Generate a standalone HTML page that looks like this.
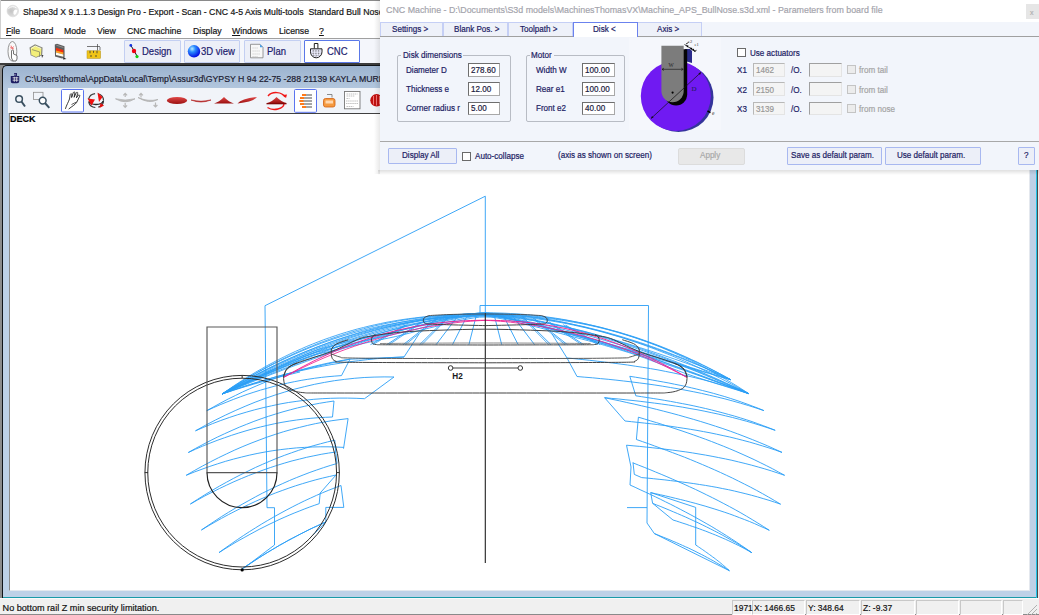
<!DOCTYPE html>
<html><head><meta charset="utf-8">
<style>
*{box-sizing:border-box;margin:0;padding:0}
html,body{width:1039px;height:615px;overflow:hidden;background:#fff;font-family:"Liberation Sans",sans-serif;position:relative}
.a{position:absolute;white-space:pre}
.a{-webkit-text-stroke:0.2px currentColor}
.btn{position:absolute;background:#eceff8;border:1px solid #c3cff2;border-radius:1px}
.inp{position:absolute;background:#fff;border:1px solid #a8a8a8;border-top-color:#6e6e6e;border-left-color:#6e6e6e}
.chk{position:absolute;width:9px;height:9px;border:1px solid #6a6a6a;background:#fff}
.grp{position:absolute;border:1px solid #b8bcc4;border-radius:2px}
</style></head><body>
<div class="a" style="left:0;top:0;width:1039px;height:1px;background:#8a8a8a"></div>
<div class="a" style="left:0;top:0;width:1px;height:64px;background:#d0d0d0"></div>
<div class="a" style="left:22.6px;top:6.50px;font-size:9.4px;line-height:9.4px;color:#141414;transform:scaleX(0.93);transform-origin:0 0;">Shape3d X 9.1.1.3 Design Pro - Export - Scan - CNC 4-5 Axis Multi-tools  Standard Bull Nose</div>
<div class="a" style="left:6.3px;top:26.10px;font-size:9.4px;line-height:9.4px;color:#141414;transform:scaleX(0.93);transform-origin:0 0;"><u>F</u>ile</div>
<div class="a" style="left:30.25px;top:26.10px;font-size:9.4px;line-height:9.4px;color:#141414;transform:scaleX(0.93);transform-origin:0 0;">Board</div>
<div class="a" style="left:63.5px;top:26.10px;font-size:9.4px;line-height:9.4px;color:#141414;transform:scaleX(0.93);transform-origin:0 0;">Mode</div>
<div class="a" style="left:97px;top:26.10px;font-size:9.4px;line-height:9.4px;color:#141414;transform:scaleX(0.93);transform-origin:0 0;">View</div>
<div class="a" style="left:126.6px;top:26.10px;font-size:9.4px;line-height:9.4px;color:#141414;transform:scaleX(0.93);transform-origin:0 0;">CNC machine</div>
<div class="a" style="left:192.5px;top:26.10px;font-size:9.4px;line-height:9.4px;color:#141414;transform:scaleX(0.93);transform-origin:0 0;">Display</div>
<div class="a" style="left:231.5px;top:26.10px;font-size:9.4px;line-height:9.4px;color:#141414;transform:scaleX(0.93);transform-origin:0 0;"><u>W</u>indows</div>
<div class="a" style="left:279px;top:26.10px;font-size:9.4px;line-height:9.4px;color:#141414;transform:scaleX(0.93);transform-origin:0 0;">License</div>
<div class="a" style="left:318.6px;top:26.10px;font-size:9.4px;line-height:9.4px;color:#141414;transform:scaleX(0.93);transform-origin:0 0;"><u>?</u></div>
<div class="a" style="left:0;top:38px;width:1039px;height:1px;background:#a0a0a0"></div>
<div class="a" style="left:0;top:39px;width:1039px;height:25px;background:#f4f6fb"></div>
<div class="btn" style="left:124.4px;top:40px;width:56.2px;height:22.5px;"></div>
<div class="btn" style="left:184.3px;top:40px;width:56.1px;height:22.5px;"></div>
<div class="btn" style="left:244.2px;top:40px;width:56.4px;height:22.5px;"></div>
<div class="btn" style="left:304.4px;top:40px;width:56.1px;height:22.5px;background:#fff;border-color:#5a78e8"></div>
<div class="a" style="left:141.8px;top:45.64px;font-size:10.7px;line-height:10.7px;color:#1c1c6e;transform:scaleX(0.89);transform-origin:0 0;">Design</div>
<div class="a" style="left:201.4px;top:45.64px;font-size:10.7px;line-height:10.7px;color:#1c1c6e;transform:scaleX(0.89);transform-origin:0 0;">3D view</div>
<div class="a" style="left:267.3px;top:45.64px;font-size:10.7px;line-height:10.7px;color:#1c1c6e;transform:scaleX(0.89);transform-origin:0 0;">Plan</div>
<div class="a" style="left:326.5px;top:45.64px;font-size:10.7px;line-height:10.7px;color:#1c1c6e;transform:scaleX(0.89);transform-origin:0 0;">CNC</div>
<div class="a" style="left:0;top:63px;width:1039px;height:2px;background:#3c3c3c"></div>
<div class="a" style="left:0;top:65px;width:1039px;height:550px;background:#8c8c8c"></div>
<div class="a" style="left:1037px;top:65px;width:2px;height:550px;background:#ececec"></div>
<div class="a" style="left:1037.3px;top:65px;width:1.2px;height:533px;background:#4a4a4a"></div>
<div class="a" style="left:2px;top:65px;width:1035px;height:533px;background:linear-gradient(to bottom,#9cb3cf 0px,#b3c7de 23px,#bed1e7 60px);border-radius:5px 5px 0 0;border:1px solid #101418;border-bottom:none;border-right:1px solid #22c4e8"></div>
<div class="a" style="left:3px;top:597px;width:1033px;height:1px;background:#1a9aa8"></div>
<div class="a" style="left:24.6px;top:74.40px;font-size:9.4px;line-height:9.4px;color:#1a1a30;transform:scaleX(0.93);transform-origin:0 0;">C:\Users\thoma\AppData\Local\Temp\Assur3d\GYPSY H 94 22-75 -288 21139 KAYLA MURPHY</div>
<div class="a" style="left:8px;top:88px;width:1022px;height:25px;background:#f1f4f9"></div>
<div class="a" style="left:8.5px;top:113px;width:1521.5px;height:478px;background:#fff;border-top:1px solid #404040;border-left:1px solid #8a8a8a;border-right:1px solid #e4e8ee;border-bottom:1px solid #e4e8ee;width:1021.5px"></div>
<div class="a" style="left:10px;top:114.40px;font-size:9.4px;line-height:9.4px;color:#000;transform:scaleX(0.96);transform-origin:0 0;font-weight:bold;">DECK</div>
<!--DRAW-->
<svg class="a" style="left:0;top:0" width="1039" height="615" viewBox="0 0 1039 615">
<path d="M222.0,394.0 L227.7,391.7 L233.3,389.4 L239.0,387.1 L244.6,384.9 L250.3,382.6 L255.9,380.4 L261.6,378.2 L267.2,376.0 L272.9,373.8 L278.6,371.7 L284.2,369.5 L289.9,367.4 L295.5,365.3 L301.2,363.3 L306.8,361.2 L312.5,359.2 L318.1,357.2 L323.8,355.2 L329.5,353.2 L335.1,351.3 L340.8,349.3 L346.4,347.4 L352.1,345.6 L357.7,343.7 L363.4,341.9 L369.0,340.1 L374.7,338.4 L380.4,336.6 L386.0,334.9 L391.7,333.2 L397.3,331.6 L403.0,330.0 L408.6,328.4 L414.3,326.9 L419.9,325.4 L425.6,323.9 L431.3,322.5 L436.9,321.2 L442.6,319.8 L448.2,318.6 L453.9,317.4 L459.5,316.3 L465.2,315.2 L470.8,314.2 L476.5,313.4 L482.2,312.7 L487.8,313.0 L493.5,314.4 L499.1,315.8 L504.8,317.2 L510.4,318.6 L516.1,320.1 L521.7,321.6 L527.4,323.1 L533.1,324.6 L538.7,326.1 L544.4,327.6 L550.0,329.1 L555.7,330.6 L561.3,332.1 L567.0,333.7 L572.6,335.2 L578.3,336.8 L584.0,338.3 L589.6,339.9 L595.3,341.4 L600.9,343.0 L606.6,344.6 L612.2,346.1 L617.9,347.7 L623.5,349.3 L629.2,350.9 L634.9,352.5 L640.5,354.0 L646.2,355.6 L651.8,357.2 L657.5,358.8 L663.1,360.4 L668.8,362.0 L674.4,363.6 L680.1,365.2 L685.8,366.9 L691.4,368.5 L697.1,370.1 L702.7,371.7 L708.4,373.3 L714.0,374.9 L719.7,376.6 L725.3,378.2 L731.0,379.8" stroke="#2a9ef6" stroke-width="0.85" fill="none" />
<path d="M222.0,394.0 L227.9,391.5 L233.7,389.0 L239.6,386.5 L245.4,384.1 L251.3,381.6 L257.1,379.3 L263.0,376.9 L268.8,374.5 L274.7,372.2 L280.5,369.9 L286.4,367.7 L292.3,365.5 L298.1,363.3 L304.0,361.1 L309.8,359.0 L315.7,356.8 L321.5,354.8 L327.4,352.7 L333.2,350.7 L339.1,348.7 L344.9,346.8 L350.8,344.9 L356.7,343.0 L362.5,341.2 L368.4,339.4 L374.2,337.6 L380.1,335.9 L385.9,334.2 L391.8,332.6 L397.6,331.0 L403.5,329.4 L409.3,327.9 L415.2,326.5 L421.1,325.1 L426.9,323.7 L432.8,322.4 L438.6,321.2 L444.5,320.0 L450.3,318.9 L456.2,317.9 L462.0,317.0 L467.9,316.2 L473.7,315.4 L479.6,314.9 L485.4,314.5 L491.3,314.8 L497.2,315.2 L503.0,315.8 L508.9,316.5 L514.7,317.3 L520.6,318.2 L526.4,319.2 L532.3,320.2 L538.1,321.3 L544.0,322.5 L549.8,323.7 L555.7,325.1 L561.6,326.4 L567.4,327.8 L573.3,329.3 L579.1,330.9 L585.0,332.4 L590.8,334.1 L596.7,335.7 L602.5,337.5 L608.4,339.2 L614.2,341.1 L620.1,342.9 L626.0,344.8 L631.8,346.8 L637.7,348.8 L643.5,350.8 L649.4,352.9 L655.2,355.0 L661.1,357.1 L666.9,359.3 L672.8,361.6 L678.6,363.8 L684.5,366.1 L690.4,368.5 L696.2,370.8 L702.1,373.2 L707.9,375.7 L713.8,378.2 L719.6,380.7 L725.5,383.2 L731.3,385.8 L737.2,388.4 L743.0,391.0 L748.9,393.7" stroke="#2a9ef6" stroke-width="0.85" fill="none" />
<path d="M222.0,394.0 L227.7,391.4 L233.3,388.8 L239.0,386.3 L244.6,383.8 L250.3,381.3 L255.9,378.9 L261.6,376.4 L267.2,374.0 L272.9,371.7 L278.6,369.4 L284.2,367.1 L289.9,364.8 L295.5,362.6 L301.2,360.4 L306.8,358.2 L312.5,356.1 L318.1,354.0 L323.8,351.9 L329.5,349.9 L335.1,347.9 L340.8,345.9 L346.4,344.0 L352.1,342.1 L357.7,340.3 L363.4,338.5 L369.0,336.7 L374.7,335.0 L380.4,333.3 L386.0,331.7 L391.7,330.1 L397.3,328.6 L403.0,327.1 L408.6,325.6 L414.3,324.2 L419.9,322.9 L425.6,321.6 L431.3,320.4 L436.9,319.2 L442.6,318.1 L448.2,317.1 L453.9,316.2 L459.5,315.3 L465.2,314.5 L470.8,313.9 L476.5,313.3 L482.2,312.9 L487.8,312.8 L493.5,312.9 L499.1,313.0 L504.8,313.2 L510.4,313.5 L516.1,313.8 L521.7,314.2 L527.4,314.7 L533.1,315.3 L538.7,315.9 L544.4,316.6 L550.0,317.4 L555.7,318.2 L561.3,319.1 L567.0,320.1 L572.6,321.2 L578.3,322.3 L584.0,323.5 L589.6,324.8 L595.3,326.1 L600.9,327.5 L606.6,329.0 L612.2,330.6 L617.9,332.2 L623.5,333.9 L629.2,335.7 L634.9,337.5 L640.5,339.4 L646.2,341.4 L651.8,343.5 L657.5,345.6 L663.1,347.8 L668.8,350.1 L674.4,352.4 L680.1,354.8 L685.8,357.3 L691.4,359.9 L697.1,362.5 L702.7,365.2 L708.4,368.0 L714.0,370.8 L719.7,373.7 L725.3,376.7 L731.0,379.8" stroke="#2a9ef6" stroke-width="0.85" fill="none" />
<path d="M222.0,394.0 L227.9,391.2 L233.7,388.4 L239.6,385.7 L245.4,383.1 L251.3,380.4 L257.1,377.8 L263.0,375.2 L268.8,372.7 L274.7,370.2 L280.5,367.8 L286.4,365.4 L292.3,363.0 L298.1,360.7 L304.0,358.5 L309.8,356.2 L315.7,354.0 L321.5,351.9 L327.4,349.8 L333.2,347.8 L339.1,345.8 L344.9,343.8 L350.8,341.9 L356.7,340.0 L362.5,338.2 L368.4,336.5 L374.2,334.8 L380.1,333.1 L385.9,331.5 L391.8,330.0 L397.6,328.5 L403.5,327.1 L409.3,325.7 L415.2,324.4 L421.1,323.1 L426.9,322.0 L432.8,320.9 L438.6,319.8 L444.5,318.9 L450.3,318.0 L456.2,317.2 L462.0,316.5 L467.9,315.9 L473.7,315.4 L479.6,315.0 L485.4,314.8 L491.3,315.6 L497.2,316.5 L503.0,317.6 L508.9,318.8 L514.7,320.0 L520.6,321.3 L526.4,322.7 L532.3,324.1 L538.1,325.6 L544.0,327.0 L549.8,328.6 L555.7,330.1 L561.6,331.7 L567.4,333.4 L573.3,335.0 L579.1,336.7 L585.0,338.4 L590.8,340.1 L596.7,341.9 L602.5,343.7 L608.4,345.5 L614.2,347.3 L620.1,349.1 L626.0,351.0 L631.8,352.9 L637.7,354.8 L643.5,356.7 L649.4,358.6 L655.2,360.6 L661.1,362.5 L666.9,364.5 L672.8,366.5 L678.6,368.5 L684.5,370.5 L690.4,372.6 L696.2,374.6 L702.1,376.7 L707.9,378.8 L713.8,380.9 L719.6,383.0 L725.5,385.1 L731.3,387.2 L737.2,389.4 L743.0,391.5 L748.9,393.7" stroke="#2a9ef6" stroke-width="0.85" fill="none" />
<path d="M222.0,394.0 L227.7,391.1 L233.3,388.2 L239.0,385.4 L244.6,382.7 L250.3,379.9 L255.9,377.3 L261.6,374.6 L267.2,372.0 L272.9,369.5 L278.6,367.0 L284.2,364.5 L289.9,362.1 L295.5,359.8 L301.2,357.5 L306.8,355.2 L312.5,353.0 L318.1,350.8 L323.8,348.7 L329.5,346.6 L335.1,344.6 L340.8,342.6 L346.4,340.7 L352.1,338.9 L357.7,337.0 L363.4,335.3 L369.0,333.6 L374.7,331.9 L380.4,330.3 L386.0,328.8 L391.7,327.3 L397.3,325.9 L403.0,324.6 L408.6,323.3 L414.3,322.0 L419.9,320.9 L425.6,319.8 L431.3,318.7 L436.9,317.8 L442.6,316.9 L448.2,316.1 L453.9,315.4 L459.5,314.7 L465.2,314.2 L470.8,313.7 L476.5,313.4 L482.2,313.1 L487.8,313.1 L493.5,313.3 L499.1,313.6 L504.8,313.9 L510.4,314.4 L516.1,315.0 L521.7,315.6 L527.4,316.3 L533.1,317.1 L538.7,317.9 L544.4,318.8 L550.0,319.8 L555.7,320.8 L561.3,321.9 L567.0,323.1 L572.6,324.3 L578.3,325.6 L584.0,327.0 L589.6,328.4 L595.3,329.8 L600.9,331.3 L606.6,332.9 L612.2,334.5 L617.9,336.2 L623.5,337.9 L629.2,339.7 L634.9,341.5 L640.5,343.3 L646.2,345.3 L651.8,347.2 L657.5,349.3 L663.1,351.3 L668.8,353.5 L674.4,355.6 L680.1,357.8 L685.8,360.1 L691.4,362.4 L697.1,364.7 L702.7,367.1 L708.4,369.6 L714.0,372.1 L719.7,374.6 L725.3,377.2 L731.0,379.8" stroke="#2a9ef6" stroke-width="0.85" fill="none" />
<path d="M222.0,394.0 L227.9,391.0 L233.7,388.1 L239.6,385.3 L245.4,382.4 L251.3,379.7 L257.1,376.9 L263.0,374.3 L268.8,371.6 L274.7,369.1 L280.5,366.5 L286.4,364.1 L292.3,361.6 L298.1,359.3 L304.0,356.9 L309.8,354.7 L315.7,352.4 L321.5,350.3 L327.4,348.2 L333.2,346.1 L339.1,344.1 L344.9,342.2 L350.8,340.3 L356.7,338.4 L362.5,336.7 L368.4,334.9 L374.2,333.3 L380.1,331.7 L385.9,330.1 L391.8,328.7 L397.6,327.3 L403.5,325.9 L409.3,324.6 L415.2,323.4 L421.1,322.3 L426.9,321.2 L432.8,320.2 L438.6,319.3 L444.5,318.4 L450.3,317.7 L456.2,317.0 L462.0,316.4 L467.9,315.9 L473.7,315.5 L479.6,315.2 L485.4,315.1 L491.3,315.1 L497.2,315.2 L503.0,315.3 L508.9,315.5 L514.7,315.8 L520.6,316.1 L526.4,316.4 L532.3,316.9 L538.1,317.4 L544.0,318.0 L549.8,318.7 L555.7,319.4 L561.6,320.3 L567.4,321.2 L573.3,322.2 L579.1,323.2 L585.0,324.4 L590.8,325.6 L596.7,326.9 L602.5,328.3 L608.4,329.8 L614.2,331.4 L620.1,333.1 L626.0,334.9 L631.8,336.7 L637.7,338.7 L643.5,340.7 L649.4,342.8 L655.2,345.0 L661.1,347.3 L666.9,349.8 L672.8,352.3 L678.6,354.9 L684.5,357.6 L690.4,360.3 L696.2,363.2 L702.1,366.2 L707.9,369.3 L713.8,372.5 L719.6,375.8 L725.5,379.2 L731.3,382.6 L737.2,386.2 L743.0,389.9 L748.9,393.7" stroke="#2a9ef6" stroke-width="0.85" fill="none" />
<path d="M222.0,394.0 L227.7,390.9 L233.3,388.0 L239.0,385.0 L244.6,382.1 L250.3,379.3 L255.9,376.5 L261.6,373.7 L267.2,371.1 L272.9,368.4 L278.6,365.8 L284.2,363.3 L289.9,360.9 L295.5,358.4 L301.2,356.1 L306.8,353.8 L312.5,351.5 L318.1,349.3 L323.8,347.2 L329.5,345.1 L335.1,343.1 L340.8,341.2 L346.4,339.3 L352.1,337.4 L357.7,335.6 L363.4,333.9 L369.0,332.2 L374.7,330.6 L380.4,329.1 L386.0,327.6 L391.7,326.2 L397.3,324.9 L403.0,323.6 L408.6,322.4 L414.3,321.2 L419.9,320.2 L425.6,319.2 L431.3,318.2 L436.9,317.4 L442.6,316.6 L448.2,315.9 L453.9,315.2 L459.5,314.7 L465.2,314.2 L470.8,313.8 L476.5,313.6 L482.2,313.4 L487.8,313.5 L493.5,313.9 L499.1,314.4 L504.8,315.1 L510.4,315.9 L516.1,316.8 L521.7,317.7 L527.4,318.7 L533.1,319.7 L538.7,320.8 L544.4,322.0 L550.0,323.2 L555.7,324.4 L561.3,325.7 L567.0,327.1 L572.6,328.5 L578.3,329.9 L584.0,331.3 L589.6,332.8 L595.3,334.4 L600.9,335.9 L606.6,337.5 L612.2,339.2 L617.9,340.8 L623.5,342.5 L629.2,344.2 L634.9,346.0 L640.5,347.8 L646.2,349.6 L651.8,351.4 L657.5,353.3 L663.1,355.2 L668.8,357.1 L674.4,359.0 L680.1,361.0 L685.8,363.0 L691.4,365.0 L697.1,367.1 L702.7,369.1 L708.4,371.2 L714.0,373.3 L719.7,375.5 L725.3,377.6 L731.0,379.8" stroke="#2a9ef6" stroke-width="0.85" fill="none" />
<path d="M222.0,394.0 L227.9,390.6 L233.7,387.4 L239.6,384.2 L245.4,381.0 L251.3,378.0 L257.1,375.0 L263.0,372.0 L268.8,369.2 L274.7,366.4 L280.5,363.7 L286.4,361.0 L292.3,358.5 L298.1,356.0 L304.0,353.6 L309.8,351.2 L315.7,348.9 L321.5,346.7 L327.4,344.6 L333.2,342.5 L339.1,340.6 L344.9,338.6 L350.8,336.8 L356.7,335.0 L362.5,333.3 L368.4,331.7 L374.2,330.2 L380.1,328.7 L385.9,327.3 L391.8,326.0 L397.6,324.7 L403.5,323.6 L409.3,322.5 L415.2,321.5 L421.1,320.5 L426.9,319.7 L432.8,318.9 L438.6,318.2 L444.5,317.5 L450.3,317.0 L456.2,316.5 L462.0,316.1 L467.9,315.8 L473.7,315.6 L479.6,315.5 L485.4,315.4 L491.3,315.5 L497.2,315.6 L503.0,315.9 L508.9,316.2 L514.7,316.6 L520.6,317.1 L526.4,317.7 L532.3,318.3 L538.1,319.0 L544.0,319.8 L549.8,320.7 L555.7,321.7 L561.6,322.7 L567.4,323.8 L573.3,325.0 L579.1,326.3 L585.0,327.6 L590.8,329.0 L596.7,330.5 L602.5,332.0 L608.4,333.7 L614.2,335.4 L620.1,337.1 L626.0,339.0 L631.8,340.9 L637.7,342.9 L643.5,344.9 L649.4,347.0 L655.2,349.2 L661.1,351.5 L666.9,353.8 L672.8,356.2 L678.6,358.7 L684.5,361.2 L690.4,363.8 L696.2,366.5 L702.1,369.3 L707.9,372.1 L713.8,375.0 L719.6,377.9 L725.5,380.9 L731.3,384.0 L737.2,387.2 L743.0,390.4 L748.9,393.7" stroke="#2a9ef6" stroke-width="0.85" fill="none" />
<path d="M222.0,394.0 L227.7,390.7 L233.3,387.4 L239.0,384.2 L244.6,381.0 L250.3,378.0 L255.9,375.0 L261.6,372.0 L267.2,369.2 L272.9,366.4 L278.6,363.7 L284.2,361.0 L289.9,358.5 L295.5,356.0 L301.2,353.5 L306.8,351.2 L312.5,348.9 L318.1,346.6 L323.8,344.5 L329.5,342.4 L335.1,340.4 L340.8,338.5 L346.4,336.6 L352.1,334.8 L357.7,333.1 L363.4,331.4 L369.0,329.9 L374.7,328.4 L380.4,326.9 L386.0,325.6 L391.7,324.3 L397.3,323.0 L403.0,321.9 L408.6,320.8 L414.3,319.8 L419.9,318.9 L425.6,318.1 L431.3,317.3 L436.9,316.6 L442.6,315.9 L448.2,315.4 L453.9,314.9 L459.5,314.5 L465.2,314.2 L470.8,313.9 L476.5,313.8 L482.2,313.7 L487.8,314.0 L493.5,315.0 L499.1,316.1 L504.8,317.3 L510.4,318.5 L516.1,319.8 L521.7,321.1 L527.4,322.4 L533.1,323.8 L538.7,325.2 L544.4,326.6 L550.0,328.0 L555.7,329.5 L561.3,330.9 L567.0,332.4 L572.6,333.9 L578.3,335.4 L584.0,336.9 L589.6,338.4 L595.3,340.0 L600.9,341.5 L606.6,343.1 L612.2,344.7 L617.9,346.3 L623.5,347.9 L629.2,349.5 L634.9,351.1 L640.5,352.7 L646.2,354.4 L651.8,356.0 L657.5,357.7 L663.1,359.3 L668.8,361.0 L674.4,362.7 L680.1,364.4 L685.8,366.0 L691.4,367.7 L697.1,369.4 L702.7,371.2 L708.4,372.9 L714.0,374.6 L719.7,376.3 L725.3,378.1 L731.0,379.8" stroke="#2a9ef6" stroke-width="0.85" fill="none" />
<path d="M222.0,394.0 L227.9,390.5 L233.7,387.1 L239.6,383.7 L245.4,380.5 L251.3,377.3 L257.1,374.2 L263.0,371.2 L268.8,368.3 L274.7,365.4 L280.5,362.6 L286.4,359.9 L292.3,357.3 L298.1,354.8 L304.0,352.3 L309.8,350.0 L315.7,347.7 L321.5,345.5 L327.4,343.4 L333.2,341.3 L339.1,339.3 L344.9,337.5 L350.8,335.7 L356.7,333.9 L362.5,332.3 L368.4,330.7 L374.2,329.2 L380.1,327.8 L385.9,326.5 L391.8,325.2 L397.6,324.1 L403.5,323.0 L409.3,321.9 L415.2,321.0 L421.1,320.1 L426.9,319.4 L432.8,318.7 L438.6,318.0 L444.5,317.5 L450.3,317.0 L456.2,316.6 L462.0,316.3 L467.9,316.0 L473.7,315.8 L479.6,315.7 L485.4,315.7 L491.3,315.9 L497.2,316.2 L503.0,316.7 L508.9,317.3 L514.7,317.9 L520.6,318.7 L526.4,319.5 L532.3,320.4 L538.1,321.4 L544.0,322.5 L549.8,323.6 L555.7,324.8 L561.6,326.1 L567.4,327.4 L573.3,328.8 L579.1,330.3 L585.0,331.8 L590.8,333.3 L596.7,334.9 L602.5,336.6 L608.4,338.3 L614.2,340.1 L620.1,341.9 L626.0,343.8 L631.8,345.7 L637.7,347.7 L643.5,349.7 L649.4,351.8 L655.2,353.9 L661.1,356.1 L666.9,358.3 L672.8,360.5 L678.6,362.8 L684.5,365.2 L690.4,367.6 L696.2,370.0 L702.1,372.5 L707.9,375.0 L713.8,377.5 L719.6,380.1 L725.5,382.8 L731.3,385.4 L737.2,388.1 L743.0,390.9 L748.9,393.7" stroke="#2a9ef6" stroke-width="0.85" fill="none" />
<path d="M222.0,394.0 L227.7,390.3 L233.3,386.7 L239.0,383.1 L244.6,379.7 L250.3,376.4 L255.9,373.1 L261.6,370.0 L267.2,366.9 L272.9,363.9 L278.6,361.1 L284.2,358.3 L289.9,355.6 L295.5,353.0 L301.2,350.5 L306.8,348.1 L312.5,345.8 L318.1,343.5 L323.8,341.4 L329.5,339.3 L335.1,337.4 L340.8,335.5 L346.4,333.7 L352.1,331.9 L357.7,330.3 L363.4,328.8 L369.0,327.3 L374.7,325.9 L380.4,324.6 L386.0,323.4 L391.7,322.3 L397.3,321.2 L403.0,320.2 L408.6,319.3 L414.3,318.5 L419.9,317.7 L425.6,317.1 L431.3,316.4 L436.9,315.9 L442.6,315.4 L448.2,315.0 L453.9,314.7 L459.5,314.4 L465.2,314.2 L470.8,314.1 L476.5,314.0 L482.2,314.0 L487.8,314.0 L493.5,314.0 L499.1,314.1 L504.8,314.3 L510.4,314.5 L516.1,314.8 L521.7,315.1 L527.4,315.6 L533.1,316.1 L538.7,316.6 L544.4,317.2 L550.0,317.9 L555.7,318.7 L561.3,319.5 L567.0,320.4 L572.6,321.4 L578.3,322.5 L584.0,323.6 L589.6,324.8 L595.3,326.1 L600.9,327.4 L606.6,328.9 L612.2,330.4 L617.9,331.9 L623.5,333.6 L629.2,335.3 L634.9,337.1 L640.5,339.0 L646.2,341.0 L651.8,343.0 L657.5,345.1 L663.1,347.3 L668.8,349.6 L674.4,351.9 L680.1,354.4 L685.8,356.9 L691.4,359.5 L697.1,362.1 L702.7,364.9 L708.4,367.7 L714.0,370.6 L719.7,373.6 L725.3,376.7 L731.0,379.8" stroke="#2a9ef6" stroke-width="0.85" fill="none" />
<path d="M222.0,394.0 L227.9,390.2 L233.7,386.5 L239.6,382.9 L245.4,379.4 L251.3,376.1 L257.1,372.8 L263.0,369.6 L268.8,366.5 L274.7,363.5 L280.5,360.7 L286.4,357.9 L292.3,355.2 L298.1,352.6 L304.0,350.1 L309.8,347.7 L315.7,345.4 L321.5,343.2 L327.4,341.1 L333.2,339.1 L339.1,337.2 L344.9,335.3 L350.8,333.6 L356.7,331.9 L362.5,330.4 L368.4,328.9 L374.2,327.5 L380.1,326.2 L385.9,325.0 L391.8,323.9 L397.6,322.8 L403.5,321.8 L409.3,321.0 L415.2,320.1 L421.1,319.4 L426.9,318.8 L432.8,318.2 L438.6,317.7 L444.5,317.2 L450.3,316.9 L456.2,316.6 L462.0,316.4 L467.9,316.2 L473.7,316.1 L479.6,316.0 L485.4,316.0 L491.3,316.5 L497.2,317.2 L503.0,318.1 L508.9,319.1 L514.7,320.1 L520.6,321.3 L526.4,322.5 L532.3,323.7 L538.1,325.1 L544.0,326.4 L549.8,327.8 L555.7,329.3 L561.6,330.8 L567.4,332.3 L573.3,333.9 L579.1,335.5 L585.0,337.2 L590.8,338.8 L596.7,340.5 L602.5,342.3 L608.4,344.1 L614.2,345.9 L620.1,347.7 L626.0,349.5 L631.8,351.4 L637.7,353.3 L643.5,355.3 L649.4,357.2 L655.2,359.2 L661.1,361.2 L666.9,363.2 L672.8,365.3 L678.6,367.3 L684.5,369.4 L690.4,371.5 L696.2,373.7 L702.1,375.8 L707.9,378.0 L713.8,380.2 L719.6,382.4 L725.5,384.6 L731.3,386.9 L737.2,389.1 L743.0,391.4 L748.9,393.7" stroke="#2a9ef6" stroke-width="0.85" fill="none" />
<path d="M222.0,394.0 L227.7,390.1 L233.3,386.2 L239.0,382.5 L244.6,378.9 L250.3,375.4 L255.9,372.0 L261.6,368.8 L267.2,365.6 L272.9,362.6 L278.6,359.6 L284.2,356.8 L289.9,354.0 L295.5,351.4 L301.2,348.9 L306.8,346.4 L312.5,344.1 L318.1,341.9 L323.8,339.7 L329.5,337.7 L335.1,335.8 L340.8,333.9 L346.4,332.2 L352.1,330.5 L357.7,328.9 L363.4,327.5 L369.0,326.1 L374.7,324.8 L380.4,323.6 L386.0,322.4 L391.7,321.4 L397.3,320.4 L403.0,319.5 L408.6,318.7 L414.3,318.0 L419.9,317.3 L425.6,316.7 L431.3,316.2 L436.9,315.8 L442.6,315.4 L448.2,315.1 L453.9,314.8 L459.5,314.6 L465.2,314.4 L470.8,314.3 L476.5,314.3 L482.2,314.3 L487.8,314.3 L493.5,314.4 L499.1,314.6 L504.8,314.9 L510.4,315.3 L516.1,315.8 L521.7,316.3 L527.4,316.9 L533.1,317.6 L538.7,318.3 L544.4,319.2 L550.0,320.1 L555.7,321.0 L561.3,322.0 L567.0,323.1 L572.6,324.3 L578.3,325.5 L584.0,326.7 L589.6,328.1 L595.3,329.5 L600.9,330.9 L606.6,332.4 L612.2,334.0 L617.9,335.6 L623.5,337.3 L629.2,339.1 L634.9,340.9 L640.5,342.7 L646.2,344.6 L651.8,346.6 L657.5,348.6 L663.1,350.7 L668.8,352.8 L674.4,355.0 L680.1,357.2 L685.8,359.5 L691.4,361.9 L697.1,364.3 L702.7,366.7 L708.4,369.3 L714.0,371.8 L719.7,374.4 L725.3,377.1 L731.0,379.8" stroke="#2a9ef6" stroke-width="0.85" fill="none" />
<path d="M222.0,394.0 L228.3,391.2 L237.1,387.3 L247.6,382.6 L259.1,377.6 L270.8,372.4 L282.0,367.5 L292.0,363.3 L300.0,360.0 L306.1,357.7 L310.9,356.0 L314.7,354.8 L317.9,353.9 L320.9,353.3 L323.8,352.7 L327.1,352.0 L331.0,351.0 L335.6,349.9 L340.4,348.7 L345.4,347.5 L350.6,346.3 L355.7,345.2 L360.7,344.1 L365.5,343.0 L370.0,342.0 L374.1,341.1 L377.9,340.3 L381.5,339.5 L384.9,338.8 L388.4,338.1 L392.0,337.3 L395.8,336.5 L400.0,335.5 L404.5,334.4 L409.2,333.2 L414.0,331.9 L419.0,330.6 L424.2,329.3 L429.4,328.0 L434.7,326.7 L440.0,325.5 L445.4,324.2 L451.0,322.9 L456.6,321.5 L462.4,320.1 L468.1,318.9 L473.9,317.9 L479.6,317.2 L485.3,317.0 L490.9,317.2 L496.6,317.9 L502.3,318.9 L508.0,320.1 L513.6,321.4 L519.2,322.8 L524.6,324.2 L530.0,325.5 L535.3,326.7 L540.6,328.0 L545.8,329.4 L550.9,330.8 L555.9,332.2 L560.8,333.5 L565.5,334.8 L570.0,336.0 L574.2,337.1 L578.0,338.1 L581.6,339.0 L585.1,339.9 L588.5,340.8 L592.1,341.8 L595.9,342.8 L600.0,344.0 L604.4,345.3 L608.8,346.6 L613.4,347.9 L618.2,349.3 L623.1,350.8 L628.2,352.4 L633.5,354.1 L639.0,356.0 L644.7,358.0 L650.7,360.3 L656.9,362.6 L663.3,365.1 L669.8,367.6 L676.4,370.1 L683.2,372.6 L690.0,375.0 L697.4,377.5 L705.5,380.1 L714.1,382.9 L722.6,385.5 L730.8,388.1 L738.1,390.3 L744.3,392.3 L748.9,393.7" stroke="#2a9ef6" stroke-width="0.85" fill="none" />
<path d="M222.0,394.0 L228.3,391.1 L237.1,387.0 L247.6,382.2 L259.1,376.9 L270.8,371.5 L282.0,366.4 L292.0,362.0 L300.0,358.5 L306.1,356.0 L310.9,354.2 L314.7,352.8 L317.9,351.8 L320.9,351.1 L323.8,350.3 L327.1,349.5 L331.0,348.5 L335.6,347.3 L340.4,346.1 L345.4,344.9 L350.6,343.8 L355.7,342.6 L360.7,341.6 L365.5,340.5 L370.0,339.5 L374.1,338.6 L377.9,337.8 L381.5,337.0 L384.9,336.3 L388.4,335.5 L392.0,334.8 L395.8,333.9 L400.0,333.0 L404.5,332.0 L409.2,330.9 L414.0,329.7 L419.0,328.5 L424.2,327.2 L429.4,326.0 L434.7,324.9 L440.0,323.8 L445.4,322.6 L451.0,321.3 L456.6,320.0 L462.4,318.7 L468.1,317.5 L473.9,316.6 L479.6,316.0 L485.3,315.8 L490.9,316.0 L496.6,316.6 L502.3,317.5 L508.0,318.6 L513.6,319.9 L519.2,321.3 L524.6,322.6 L530.0,323.8 L535.3,324.9 L540.6,326.1 L545.8,327.4 L550.9,328.6 L555.9,329.9 L560.8,331.1 L565.5,332.4 L570.0,333.5 L574.2,334.6 L578.0,335.5 L581.6,336.5 L585.1,337.4 L588.5,338.3 L592.1,339.3 L595.9,340.3 L600.0,341.5 L604.4,342.8 L608.8,344.1 L613.4,345.4 L618.2,346.8 L623.1,348.3 L628.2,349.9 L633.5,351.7 L639.0,353.5 L644.7,355.5 L650.7,357.6 L656.9,359.8 L663.3,362.1 L669.8,364.5 L676.4,367.0 L683.2,369.5 L690.0,372.0 L697.4,374.7 L705.5,377.7 L714.1,380.9 L722.6,384.0 L730.8,387.0 L738.1,389.7 L744.3,392.0 L748.9,393.7" stroke="#2a9ef6" stroke-width="0.85" fill="none" />
<path d="M222.0,394.0 L228.3,391.0 L237.1,386.7 L247.6,381.7 L259.1,376.2 L270.8,370.6 L282.0,365.3 L292.0,360.6 L300.0,357.0 L306.1,354.4 L310.9,352.4 L314.7,350.9 L317.9,349.8 L320.9,348.8 L323.8,348.0 L327.1,347.1 L331.0,346.0 L335.6,344.8 L340.4,343.6 L345.4,342.4 L350.6,341.2 L355.7,340.1 L360.7,339.0 L365.5,338.0 L370.0,337.0 L374.1,336.1 L377.9,335.2 L381.5,334.5 L384.9,333.7 L388.4,333.0 L392.0,332.2 L395.8,331.4 L400.0,330.5 L404.5,329.5 L409.2,328.5 L414.0,327.4 L419.0,326.3 L424.2,325.2 L429.4,324.1 L434.7,323.0 L440.0,322.0 L445.4,320.9 L451.0,319.7 L456.6,318.5 L462.4,317.2 L468.1,316.2 L473.9,315.3 L479.6,314.7 L485.3,314.5 L490.9,314.7 L496.6,315.3 L502.3,316.1 L508.0,317.2 L513.6,318.4 L519.2,319.7 L524.6,320.9 L530.0,322.0 L535.3,323.1 L540.6,324.2 L545.8,325.3 L550.9,326.5 L555.9,327.6 L560.8,328.8 L565.5,329.9 L570.0,331.0 L574.2,332.0 L578.0,333.0 L581.6,333.9 L585.1,334.8 L588.5,335.8 L592.1,336.7 L595.9,337.8 L600.0,339.0 L604.4,340.3 L608.8,341.6 L613.4,342.9 L618.2,344.4 L623.1,345.9 L628.2,347.5 L633.5,349.2 L639.0,351.0 L644.7,352.9 L650.7,354.9 L656.9,357.0 L663.3,359.2 L669.8,361.5 L676.4,363.9 L683.2,366.4 L690.0,369.0 L697.4,371.9 L705.5,375.3 L714.1,378.9 L722.6,382.5 L730.8,386.0 L738.1,389.1 L744.3,391.7 L748.9,393.7" stroke="#2a9ef6" stroke-width="0.85" fill="none" />
<path d="M206.7,410.7 L213.9,406.7 L221.0,402.8 L228.2,399.0 L235.4,395.5 L242.5,392.0 L249.7,388.8 L256.9,385.7 L264.0,382.7 L271.2,379.9 L278.4,377.2 L285.5,374.8 L292.7,372.4 L299.8,370.2 L307.0,368.2 L314.2,366.3 L321.3,364.6 L328.5,363.0 L335.7,361.6 L342.8,360.3 L350.0,359.2" stroke="#2a9ef6" stroke-width="0.9" fill="none" />
<path d="M206.7,410.7 L213.4,407.7 L220.2,404.7 L226.9,402.0 L233.7,399.3 L240.4,396.8 L247.1,394.4 L253.9,392.2 L260.6,390.1 L267.4,388.2 L274.1,386.3 L280.8,384.6 L287.6,383.1 L294.3,381.7 L301.1,380.4 L307.8,379.3 L314.5,378.3 L321.3,377.4 L328.0,376.7 L334.8,376.1 L341.5,375.6" stroke="#2a9ef6" stroke-width="0.9" fill="none" />
<path d="M195.5,430.8 L205.4,425.3 L215.3,420.1 L225.3,415.2 L235.2,410.6 L245.1,406.3 L255.1,402.2 L265.0,398.5 L274.9,395.1 L284.8,392.0 L294.8,389.1 L304.7,386.6 L314.6,384.3 L324.5,382.4 L334.4,380.7 L344.4,379.4 L354.3,378.3 L364.2,377.5 L374.1,377.1 L384.1,376.9 L394.0,377.0" stroke="#2a9ef6" stroke-width="0.9" fill="none" />
<path d="M195.5,430.8 L203.9,427.2 L212.4,423.7 L220.8,420.5 L229.3,417.5 L237.8,414.7 L246.2,412.2 L254.7,409.8 L263.1,407.7 L271.6,405.8 L280.0,404.0 L288.4,402.5 L296.9,401.3 L305.4,400.2 L313.8,399.3 L322.2,398.7 L330.7,398.3 L339.1,398.1 L347.6,398.1 L356.1,398.3 L364.5,398.7" stroke="#2a9ef6" stroke-width="0.9" fill="none" />
<path d="M188.3,452.5 L195.6,448.4 L202.9,444.5 L210.2,440.7 L217.4,437.1 L224.7,433.7 L232.0,430.4 L239.3,427.2 L246.6,424.3 L253.9,421.4 L261.1,418.8 L268.4,416.3 L275.7,414.0 L283.0,411.8 L290.3,409.8 L297.6,407.9 L304.9,406.2 L312.1,404.7 L319.4,403.3 L326.7,402.1 L334.0,401.0" stroke="#2a9ef6" stroke-width="0.9" fill="none" />
<path d="M188.3,452.5 L195.5,449.2 L202.7,446.1 L209.9,443.2 L217.1,440.4 L224.4,437.8 L231.6,435.3 L238.8,433.0 L246.0,430.8 L253.2,428.8 L260.4,427.0 L267.6,425.3 L274.8,423.7 L282.0,422.3 L289.2,421.1 L296.5,420.0 L303.7,419.1 L310.9,418.3 L318.1,417.7 L325.3,417.3 L332.5,417.0" stroke="#2a9ef6" stroke-width="0.9" fill="none" />
<path d="M186.2,475.3 L194.3,470.6 L202.4,466.1 L210.5,461.8 L218.6,457.7 L226.7,453.8 L234.8,450.0 L242.9,446.5 L251.0,443.2 L259.1,440.1 L267.1,437.1 L275.2,434.4 L283.3,431.8 L291.4,429.5 L299.5,427.4 L307.6,425.4 L315.7,423.6 L323.8,422.1 L331.9,420.7 L340.0,419.6 L348.1,418.6" stroke="#2a9ef6" stroke-width="0.9" fill="none" />
<path d="M186.2,475.3 L194.1,472.1 L202.0,469.2 L209.8,466.4 L217.7,463.8 L225.6,461.3 L233.5,459.1 L241.4,457.1 L249.2,455.2 L257.1,453.5 L265.0,452.0 L272.9,450.7 L280.8,449.6 L288.6,448.7 L296.5,447.9 L304.4,447.4 L312.3,447.0 L320.2,446.8 L328.0,446.8 L335.9,447.0 L343.8,447.4" stroke="#2a9ef6" stroke-width="0.9" fill="none" />
<path d="M190.4,504.0 L197.6,499.3 L204.8,494.8 L212.1,490.4 L219.3,486.2 L226.5,482.2 L233.7,478.3 L240.9,474.6 L248.2,471.0 L255.4,467.5 L262.6,464.3 L269.8,461.2 L277.0,458.2 L284.3,455.4 L291.5,452.8 L298.7,450.3 L305.9,448.0 L313.1,445.8 L320.4,443.8 L327.6,441.9 L334.8,440.2" stroke="#2a9ef6" stroke-width="0.9" fill="none" />
<path d="M190.4,504.0 L197.7,499.9 L204.9,495.9 L212.2,492.2 L219.5,488.5 L226.7,485.1 L234.0,481.7 L241.3,478.6 L248.5,475.6 L255.8,472.8 L263.1,470.1 L270.3,467.6 L277.6,465.2 L284.8,463.0 L292.1,460.9 L299.4,459.1 L306.6,457.3 L313.9,455.8 L321.2,454.3 L328.4,453.1 L335.7,452.0" stroke="#2a9ef6" stroke-width="0.9" fill="none" />
<path d="M201.4,530.0 L208.2,525.4 L215.0,520.9 L221.7,516.5 L228.5,512.3 L235.3,508.2 L242.1,504.3 L248.9,500.5 L255.6,496.8 L262.4,493.2 L269.2,489.9 L276.0,486.6 L282.8,483.5 L289.5,480.5 L296.3,477.7 L303.1,475.0 L309.9,472.4 L316.7,470.0 L323.4,467.7 L330.2,465.5 L337.0,463.5" stroke="#2a9ef6" stroke-width="0.9" fill="none" />
<path d="M201.4,530.0 L208.1,526.0 L214.9,522.1 L221.6,518.3 L228.3,514.7 L235.1,511.2 L241.8,507.8 L248.5,504.6 L255.2,501.5 L262.0,498.5 L268.7,495.7 L275.4,493.0 L282.2,490.5 L288.9,488.1 L295.6,485.8 L302.4,483.7 L309.1,481.7 L315.8,479.8 L322.5,478.1 L329.3,476.5 L336.0,475.0" stroke="#2a9ef6" stroke-width="0.9" fill="none" />
<path d="M219.0,552.6 L225.1,548.2 L231.2,543.9 L237.3,539.7 L243.4,535.6 L249.5,531.6 L255.6,527.8 L261.7,524.0 L267.8,520.4 L273.9,516.9 L280.0,513.5 L286.1,510.2 L292.2,507.0 L298.3,503.9 L304.4,500.9 L310.5,498.1 L316.6,495.3 L322.7,492.7 L328.8,490.2 L334.9,487.8 L341.0,485.5" stroke="#2a9ef6" stroke-width="0.9" fill="none" />
<path d="M219.0,552.6 L224.0,549.4 L229.0,546.4 L234.0,543.3 L239.0,540.4 L244.1,537.6 L249.1,534.8 L254.1,532.1 L259.1,529.4 L264.1,526.9 L269.1,524.4 L274.1,522.0 L279.1,519.6 L284.1,517.4 L289.1,515.2 L294.1,513.1 L299.2,511.1 L304.2,509.1 L309.2,507.2 L314.2,505.4 L319.2,503.7" stroke="#2a9ef6" stroke-width="0.9" fill="none" />
<path d="M242.0,569.0 L246.2,566.1 L250.4,563.4 L254.6,560.6 L258.8,557.9 L262.9,555.3 L267.1,552.7 L271.3,550.2 L275.5,547.7 L279.7,545.2 L283.9,542.9 L288.1,540.5 L292.3,538.3 L296.5,536.1 L300.7,533.9 L304.9,531.8 L309.0,529.7 L313.2,527.7 L317.4,525.8 L321.6,523.8 L325.8,522.0" stroke="#2a9ef6" stroke-width="0.9" fill="none" />
<path d="M242.0,569.0 L246.2,566.1 L250.4,563.4 L254.6,560.6 L258.8,557.9 L262.9,555.3 L267.1,552.7 L271.3,550.2 L275.5,547.7 L279.7,545.2 L283.9,542.9 L288.1,540.5 L292.3,538.3 L296.5,536.1 L300.7,533.9 L304.9,531.8 L309.0,529.7 L313.2,527.7 L317.4,525.8 L321.6,523.8 L325.8,522.0" stroke="#2a9ef6" stroke-width="0.9" fill="none" />
<path d="M350.0,359.2 L341.5,375.6" stroke="#2a9ef6" stroke-width="0.9" fill="none" />
<path d="M394.0,377.0 L364.5,398.7" stroke="#2a9ef6" stroke-width="0.9" fill="none" />
<path d="M334.0,401.0 L332.5,417.0" stroke="#2a9ef6" stroke-width="0.9" fill="none" />
<path d="M348.1,418.6 L343.5,448.7" stroke="#2a9ef6" stroke-width="0.9" fill="none" />
<path d="M334.8,440.2 L335.7,452.0 L337.0,463.5" stroke="#2a9ef6" stroke-width="0.9" fill="none" />
<path d="M336.0,475.0 L320.2,493.0 L319.2,503.7" stroke="#2a9ef6" stroke-width="0.9" fill="none" />
<path d="M341.0,485.5 L343.8,507.4 L325.8,507.4 L325.8,522.0 L313.0,535.0" stroke="#2a9ef6" stroke-width="0.9" fill="none" />
<path d="M350.0,359.2 L404.0,357.0 L419.0,334.0" stroke="#2a9ef6" stroke-width="0.9" fill="none" />
<path d="M222.0,394.0 L228.4,391.8 L234.8,389.6 L241.2,387.5 L247.6,385.5 L254.0,383.5 L260.4,381.5 L266.8,379.6 L273.2,377.7 L279.6,375.9 L286.0,374.1 L292.4,372.4 L298.8,370.8 L305.2,369.1 L311.6,367.6 L318.0,366.1 L324.4,364.6 L330.8,363.2 L337.2,361.8 L343.6,360.5 L350.0,359.2" stroke="#2a9ef6" stroke-width="0.9" fill="none" />
<path d="M222.0,394.0 L231.1,390.7 L240.2,387.6 L249.3,384.6 L258.4,381.8 L267.5,379.2 L276.6,376.6 L285.7,374.3 L294.8,372.0 L303.9,370.0 L313.0,368.0 L322.1,366.3 L331.2,364.6 L340.3,363.2 L349.4,361.8 L358.5,360.7 L367.6,359.6 L376.7,358.7 L385.8,358.0 L394.9,357.4 L404.0,357.0" stroke="#2a9ef6" stroke-width="0.9" fill="none" />
<path d="M222.0,394.0 L225.9,392.7 L229.8,391.5 L233.7,390.2 L237.6,389.0 L241.5,387.8 L245.4,386.6 L249.3,385.5 L253.2,384.3 L257.1,383.2 L261.0,382.1 L264.9,381.0 L268.8,379.9 L272.7,378.9 L276.6,377.8 L280.5,376.8 L284.4,375.8 L288.3,374.8 L292.2,373.9 L296.1,372.9 L300.0,372.0" stroke="#2a9ef6" stroke-width="0.9" fill="none" />
<path d="M577.0,376.5 L584.8,377.2 L592.6,377.8 L600.4,378.6 L608.2,379.3 L615.9,380.1 L623.7,381.0 L631.5,381.9 L639.3,382.9 L647.1,383.9 L654.9,385.0 L662.7,386.2 L670.4,387.5 L678.2,388.8 L686.0,390.3 L693.8,391.8 L701.6,393.4 L709.4,395.2 L717.2,397.0 L725.0,398.9 L732.8,401.0 L740.5,403.2 L748.3,405.5 L756.1,408.0 L763.9,410.6" stroke="#2a9ef6" stroke-width="0.9" fill="none" />
<path d="M629.8,376.3 L635.4,377.2 L641.0,378.1 L646.6,379.0 L652.2,380.0 L657.7,381.0 L663.3,382.0 L668.9,383.0 L674.5,384.2 L680.1,385.3 L685.7,386.5 L691.3,387.8 L696.8,389.1 L702.4,390.5 L708.0,391.9 L713.6,393.4 L719.2,395.0 L724.8,396.6 L730.4,398.4 L736.0,400.2 L741.5,402.1 L747.1,404.1 L752.7,406.2 L758.3,408.3 L763.9,410.6" stroke="#2a9ef6" stroke-width="0.9" fill="none" />
<path d="M635.8,395.8 L641.6,396.7 L647.4,397.6 L653.2,398.5 L659.0,399.4 L664.8,400.4 L670.6,401.4 L676.5,402.5 L682.3,403.6 L688.1,404.7 L693.9,405.9 L699.7,407.2 L705.5,408.5 L711.3,409.9 L717.1,411.4 L722.9,412.9 L728.7,414.5 L734.5,416.1 L740.4,417.9 L746.2,419.7 L752.0,421.6 L757.8,423.7 L763.6,425.8 L769.4,428.0 L775.2,430.3" stroke="#2a9ef6" stroke-width="0.9" fill="none" />
<path d="M604.6,397.7 L611.7,398.4 L618.8,399.0 L625.9,399.8 L633.0,400.5 L640.1,401.3 L647.2,402.2 L654.4,403.1 L661.5,404.0 L668.6,405.0 L675.7,406.1 L682.8,407.2 L689.9,408.5 L697.0,409.7 L704.1,411.1 L711.2,412.6 L718.3,414.1 L725.4,415.8 L732.6,417.5 L739.7,419.4 L746.8,421.3 L753.9,423.4 L761.0,425.6 L768.1,427.9 L775.2,430.3" stroke="#2a9ef6" stroke-width="0.9" fill="none" />
<path d="M625.0,421.0 L631.5,421.7 L638.1,422.4 L644.6,423.1 L651.2,423.8 L657.7,424.6 L664.2,425.5 L670.8,426.3 L677.3,427.3 L683.9,428.3 L690.4,429.3 L697.0,430.4 L703.5,431.6 L710.0,432.8 L716.6,434.2 L723.1,435.6 L729.7,437.0 L736.2,438.6 L742.8,440.3 L749.3,442.0 L755.8,443.9 L762.4,445.9 L768.9,447.9 L775.5,450.1 L782.0,452.4" stroke="#2a9ef6" stroke-width="0.9" fill="none" />
<path d="M604.6,397.7 L612.0,399.3 L619.4,400.8 L626.8,402.5 L634.2,404.1 L641.6,405.8 L649.0,407.5 L656.3,409.3 L663.7,411.2 L671.1,413.1 L678.5,415.1 L685.9,417.2 L693.3,419.3 L700.7,421.5 L708.1,423.8 L715.5,426.2 L722.9,428.6 L730.3,431.2 L737.7,433.9 L745.0,436.7 L752.4,439.6 L759.8,442.6 L767.2,445.7 L774.6,449.0 L782.0,452.4" stroke="#2a9ef6" stroke-width="0.9" fill="none" />
<path d="M638.4,417.2 L644.5,419.0 L650.6,420.9 L656.7,422.7 L662.8,424.6 L668.9,426.6 L674.9,428.6 L681.0,430.6 L687.1,432.7 L693.2,434.8 L699.3,437.0 L705.4,439.2 L711.5,441.5 L717.6,443.9 L723.7,446.3 L729.8,448.8 L735.9,451.4 L742.0,454.1 L748.0,456.8 L754.1,459.6 L760.2,462.6 L766.3,465.6 L772.4,468.7 L778.5,472.0 L784.6,475.3" stroke="#2a9ef6" stroke-width="0.9" fill="none" />
<path d="M626.5,445.2 L633.1,445.8 L639.7,446.4 L646.3,447.1 L652.9,447.8 L659.4,448.5 L666.0,449.3 L672.6,450.1 L679.2,451.0 L685.8,451.9 L692.4,452.9 L699.0,454.0 L705.6,455.1 L712.1,456.3 L718.7,457.6 L725.3,458.9 L731.9,460.3 L738.5,461.9 L745.1,463.5 L751.7,465.2 L758.2,467.0 L764.8,468.9 L771.4,470.9 L778.0,473.1 L784.6,475.3" stroke="#2a9ef6" stroke-width="0.9" fill="none" />
<path d="M636.4,439.5 L642.4,441.6 L648.4,443.7 L654.4,445.9 L660.4,448.1 L666.4,450.3 L672.4,452.6 L678.5,454.9 L684.5,457.2 L690.5,459.6 L696.5,462.1 L702.5,464.6 L708.5,467.2 L714.5,469.8 L720.5,472.5 L726.5,475.3 L732.5,478.1 L738.5,481.1 L744.5,484.1 L750.6,487.2 L756.6,490.4 L762.6,493.7 L768.6,497.1 L774.6,500.6 L780.6,504.2" stroke="#2a9ef6" stroke-width="0.9" fill="none" />
<path d="M641.7,477.6 L647.5,478.1 L653.3,478.7 L659.1,479.3 L664.9,479.9 L670.6,480.6 L676.4,481.3 L682.2,482.0 L688.0,482.8 L693.8,483.6 L699.6,484.5 L705.4,485.4 L711.2,486.4 L716.9,487.4 L722.7,488.6 L728.5,489.7 L734.3,491.0 L740.1,492.4 L745.9,493.8 L751.7,495.3 L757.5,496.9 L763.2,498.6 L769.0,500.3 L774.8,502.2 L780.6,504.2" stroke="#2a9ef6" stroke-width="0.9" fill="none" />
<path d="M632.8,462.8 L638.5,465.1 L644.2,467.3 L649.9,469.6 L655.6,472.0 L661.2,474.3 L666.9,476.7 L672.6,479.2 L678.3,481.7 L684.0,484.2 L689.7,486.8 L695.4,489.4 L701.0,492.1 L706.7,494.9 L712.4,497.7 L718.1,500.6 L723.8,503.6 L729.5,506.6 L735.2,509.7 L740.9,512.9 L746.5,516.2 L752.2,519.6 L757.9,523.1 L763.6,526.6 L769.3,530.3" stroke="#2a9ef6" stroke-width="0.9" fill="none" />
<path d="M650.7,492.6 L655.6,493.7 L660.6,494.8 L665.5,495.9 L670.5,497.1 L675.4,498.3 L680.4,499.5 L685.3,500.7 L690.2,502.0 L695.2,503.3 L700.1,504.7 L705.1,506.1 L710.0,507.6 L714.9,509.1 L719.9,510.7 L724.8,512.3 L729.8,514.0 L734.7,515.8 L739.6,517.7 L744.6,519.6 L749.5,521.5 L754.5,523.6 L759.4,525.8 L764.4,528.0 L769.3,530.3" stroke="#2a9ef6" stroke-width="0.9" fill="none" />
<path d="M630.0,485.0 L635.1,487.3 L640.1,489.7 L645.2,492.0 L650.3,494.4 L655.4,496.8 L660.5,499.3 L665.5,501.8 L670.6,504.3 L675.7,506.9 L680.7,509.5 L685.8,512.2 L690.9,514.9 L696.0,517.7 L701.0,520.5 L706.1,523.4 L711.2,526.3 L716.3,529.4 L721.3,532.5 L726.4,535.6 L731.5,538.9 L736.6,542.2 L741.6,545.6 L746.7,549.1 L751.8,552.7" stroke="#2a9ef6" stroke-width="0.9" fill="none" />
<path d="M673.0,520.0 L676.3,521.0 L679.6,522.1 L682.9,523.2 L686.1,524.2 L689.4,525.4 L692.7,526.5 L696.0,527.6 L699.3,528.8 L702.5,530.0 L705.8,531.2 L709.1,532.5 L712.4,533.8 L715.7,535.1 L719.0,536.5 L722.2,537.9 L725.5,539.3 L728.8,540.8 L732.1,542.4 L735.4,544.0 L738.7,545.6 L742.0,547.3 L745.2,549.0 L748.5,550.8 L751.8,552.7" stroke="#2a9ef6" stroke-width="0.9" fill="none" />
<path d="M654.4,533.6 L657.5,534.8 L660.6,536.1 L663.8,537.4 L666.9,538.6 L670.0,539.9 L673.1,541.3 L676.3,542.6 L679.4,544.0 L682.5,545.4 L685.6,546.8 L688.8,548.2 L691.9,549.7 L695.0,551.2 L698.1,552.8 L701.3,554.4 L704.4,556.0 L707.5,557.7 L710.6,559.4 L713.8,561.1 L716.9,563.0 L720.0,564.8 L723.1,566.7 L726.3,568.7 L729.4,570.7" stroke="#2a9ef6" stroke-width="0.9" fill="none" />
<path d="M695.7,545.0 L697.1,545.9 L698.5,546.9 L699.9,547.8 L701.3,548.8 L702.7,549.7 L704.1,550.7 L705.5,551.7 L706.9,552.7 L708.3,553.7 L709.7,554.7 L711.1,555.7 L712.5,556.8 L714.0,557.8 L715.4,558.9 L716.8,560.0 L718.2,561.1 L719.6,562.2 L721.0,563.4 L722.4,564.5 L723.8,565.7 L725.2,566.9 L726.6,568.2 L728.0,569.4 L729.4,570.7" stroke="#2a9ef6" stroke-width="0.9" fill="none" />
<path d="M567.0,358.0 L574.6,358.7 L582.2,359.5 L589.7,360.3 L597.3,361.2 L604.9,362.1 L612.5,363.0 L620.1,364.0 L627.6,365.0 L635.2,366.2 L642.8,367.3 L650.4,368.6 L658.0,369.9 L665.5,371.4 L673.1,372.9 L680.7,374.5 L688.3,376.1 L695.8,377.9 L703.4,379.8 L711.0,381.8 L718.6,384.0 L726.2,386.2 L733.7,388.6 L741.3,391.1 L748.9,393.7" stroke="#2a9ef6" stroke-width="0.9" fill="none" />
<path d="M652.6,503.3 L656.7,505.0 L660.9,506.6 L665.0,508.3 L669.1,510.0 L673.3,511.8 L677.4,513.5 L681.5,515.3 L685.7,517.1 L689.8,519.0 L693.9,520.9 L698.1,522.8 L702.2,524.8 L706.3,526.8 L710.5,528.9 L714.6,531.0 L718.7,533.1 L722.9,535.4 L727.0,537.7 L731.1,540.0 L735.3,542.4 L739.4,544.9 L743.5,547.4 L747.7,550.0 L751.8,552.7" stroke="#2a9ef6" stroke-width="0.9" fill="none" />
<path d="M567.0,358.0 L577.0,376.5" stroke="#2a9ef6" stroke-width="0.9" fill="none" />
<path d="M629.8,376.3 L635.8,395.8" stroke="#2a9ef6" stroke-width="0.9" fill="none" />
<path d="M604.6,397.7 L625.0,421.0" stroke="#2a9ef6" stroke-width="0.9" fill="none" />
<path d="M638.4,417.2 L636.4,439.5" stroke="#2a9ef6" stroke-width="0.9" fill="none" />
<path d="M626.5,445.2 L631.0,467.0 L630.0,485.0" stroke="#2a9ef6" stroke-width="0.9" fill="none" />
<path d="M633.0,462.5 L634.3,474.4 L641.7,477.6" stroke="#2a9ef6" stroke-width="0.9" fill="none" />
<path d="M650.7,492.6 L652.6,503.3 L673.0,520.0" stroke="#2a9ef6" stroke-width="0.9" fill="none" />
<path d="M650.7,492.6 L695.7,507.4 L695.7,545.0" stroke="#2a9ef6" stroke-width="0.9" fill="none" />
<path d="M567.0,358.0 L552.0,334.0" stroke="#2a9ef6" stroke-width="0.9" fill="none" />
<path d="M265.0,305.7 L485.3,196.2 L485.3,313.0" stroke="#2a9ef6" stroke-width="0.9" fill="none" />
<path d="M265.0,305.7 L267.0,507.7 L274.5,507.7 L274.5,545.0 L244.0,568.0" stroke="#2a9ef6" stroke-width="0.9" fill="none" />
<path d="M480.0,313.0 L480.0,305.5 L648.5,305.5 L647.0,523.0 L654.4,533.6 L729.4,570.7" stroke="#2a9ef6" stroke-width="0.9" fill="none" />
<path d="M627.0,507.6 L647.0,507.6" stroke="#2a9ef6" stroke-width="0.9" fill="none" />
<path d="M405.0,325.2 L370.5,344.6" stroke="#2a9ef6" stroke-width="0.9" fill="none" />
<path d="M421.4,321.9 L386.9,344.6" stroke="#2a9ef6" stroke-width="0.9" fill="none" />
<path d="M435.8,319.0 L403.3,344.6" stroke="#2a9ef6" stroke-width="0.9" fill="none" />
<path d="M448.1,316.6 L419.7,344.6" stroke="#2a9ef6" stroke-width="0.9" fill="none" />
<path d="M459.0,314.5 L436.1,344.6" stroke="#2a9ef6" stroke-width="0.9" fill="none" />
<path d="M468.3,313.5 L452.5,344.6" stroke="#2a9ef6" stroke-width="0.9" fill="none" />
<path d="M476.8,313.5 L468.9,344.6" stroke="#2a9ef6" stroke-width="0.9" fill="none" />
<path d="M493.8,313.5 L501.7,344.6" stroke="#2a9ef6" stroke-width="0.9" fill="none" />
<path d="M502.3,313.5 L518.1,344.6" stroke="#2a9ef6" stroke-width="0.9" fill="none" />
<path d="M511.6,314.5 L534.5,344.6" stroke="#2a9ef6" stroke-width="0.9" fill="none" />
<path d="M522.5,316.6 L550.9,344.6" stroke="#2a9ef6" stroke-width="0.9" fill="none" />
<path d="M534.8,319.0 L567.3,344.6" stroke="#2a9ef6" stroke-width="0.9" fill="none" />
<path d="M549.2,321.9 L583.7,344.6" stroke="#2a9ef6" stroke-width="0.9" fill="none" />
<path d="M565.6,325.2 L600.1,344.6" stroke="#2a9ef6" stroke-width="0.9" fill="none" />
<path d="M407.4,324.7 L372.7,344.6" stroke="#2a9ef6" stroke-width="0.8" fill="none" />
<path d="M423.6,321.4 L389.1,344.6" stroke="#2a9ef6" stroke-width="0.8" fill="none" />
<path d="M437.5,318.7 L405.5,344.6" stroke="#2a9ef6" stroke-width="0.8" fill="none" />
<path d="M449.7,316.3 L421.9,344.6" stroke="#2a9ef6" stroke-width="0.8" fill="none" />
<path d="M520.9,316.3 L548.7,344.6" stroke="#2a9ef6" stroke-width="0.8" fill="none" />
<path d="M533.1,318.7 L565.1,344.6" stroke="#2a9ef6" stroke-width="0.8" fill="none" />
<path d="M547.0,321.4 L581.5,344.6" stroke="#2a9ef6" stroke-width="0.8" fill="none" />
<path d="M563.2,324.7 L597.9,344.6" stroke="#2a9ef6" stroke-width="0.8" fill="none" />
<path d="M283.7,377.4 L288.7,374.5 L293.8,371.6 L298.8,368.8 L303.9,366.1 L308.9,363.5 L313.9,360.9 L319.0,358.5 L324.0,356.1 L329.1,353.8 L334.1,351.5 L339.1,349.4 L344.2,347.3 L349.2,345.3 L354.3,343.4 L359.3,341.6 L364.3,339.8 L369.4,338.2 L374.4,336.6 L379.5,335.1 L384.5,333.6 L389.5,332.3 L394.6,331.0 L399.6,329.8 L404.7,328.6 L409.7,327.6 L414.7,326.6 L419.8,325.7 L424.8,324.9 L429.9,324.1 L434.9,323.4 L439.9,322.8 L445.0,322.2 L450.0,321.8 L455.1,321.4 L460.1,321.0 L465.1,320.8 L470.2,320.5 L475.2,320.4 L480.3,320.3 L485.3,320.3 L490.3,320.3 L495.4,320.4 L500.4,320.5 L505.5,320.8 L510.5,321.0 L515.5,321.4 L520.6,321.8 L525.6,322.2 L530.7,322.8 L535.7,323.4 L540.7,324.1 L545.8,324.9 L550.8,325.7 L555.9,326.6 L560.9,327.6 L565.9,328.6 L571.0,329.8 L576.0,331.0 L581.1,332.3 L586.1,333.6 L591.1,335.1 L596.2,336.6 L601.2,338.2 L606.3,339.8 L611.3,341.6 L616.3,343.4 L621.4,345.3 L626.4,347.3 L631.5,349.4 L636.5,351.5 L641.5,353.8 L646.6,356.1 L651.6,358.5 L656.7,360.9 L661.7,363.5 L666.7,366.1 L671.8,368.8 L676.8,371.6 L681.9,374.5 L686.9,377.4" stroke="#ee2090" stroke-width="0.95" fill="none"/>
<path d="M283.7,377.4 L288.7,374.7 L293.8,372.1 L298.8,369.6 L303.9,367.1 L308.9,364.7 L313.9,362.4 L319.0,360.1 L324.0,357.9 L329.1,355.8 L334.1,353.8 L339.1,351.8 L344.2,349.9 L349.2,348.1 L354.3,346.3 L359.3,344.6 L364.3,342.9 L369.4,341.3 L374.4,339.7 L379.5,338.3 L384.5,336.8 L389.5,335.5 L394.6,334.1 L399.6,332.9 L404.7,331.7 L409.7,330.5 L414.7,329.5 L419.8,328.4 L424.8,327.4 L429.9,326.5 L434.9,325.7 L439.9,324.9 L445.0,324.1 L450.0,323.4 L455.1,322.8 L460.1,322.2 L465.1,321.7 L470.2,321.3 L475.2,320.9 L480.3,320.6 L485.3,320.3 L490.3,320.6 L495.4,320.9 L500.4,321.3 L505.5,321.7 L510.5,322.2 L515.5,322.8 L520.6,323.4 L525.6,324.1 L530.7,324.9 L535.7,325.7 L540.7,326.5 L545.8,327.4 L550.8,328.4 L555.9,329.5 L560.9,330.5 L565.9,331.7 L571.0,332.9 L576.0,334.1 L581.1,335.5 L586.1,336.8 L591.1,338.3 L596.2,339.7 L601.2,341.3 L606.3,342.9 L611.3,344.6 L616.3,346.3 L621.4,348.1 L626.4,349.9 L631.5,351.8 L636.5,353.8 L641.5,355.8 L646.6,357.9 L651.6,360.1 L656.7,362.4 L661.7,364.7 L666.7,367.1 L671.8,369.6 L676.8,372.1 L681.9,374.7 L686.9,377.4" stroke="#ee2090" stroke-width="0.85" fill="none"/>
<circle cx="242.15" cy="472.6" r="97.2" stroke="#2c2c2c" stroke-width="1" fill="none"/>
<circle cx="242.15" cy="472.6" r="94.4" stroke="#2c2c2c" stroke-width="1" fill="none"/>
<path d="M144.65,472.6 h3.5 M336.15,472.6 h3.5 M242.15,375.1 v3" stroke="#2c2c2c" stroke-width="1.0" fill="none"/>
<circle cx="242.15" cy="569.9" r="1.6" fill="#000"/>
<path d="M207,472.6 V327 H277 V472.6 Z" stroke="#585858" stroke-width="1.15" fill="none"/>
<path d="M207,472.6 A35,35 0 0 0 277,472.6" stroke="#202020" stroke-width="1.15" fill="none"/>
<path d="M485.3,313 V563" stroke="#202020" stroke-width="1.1" fill="none"/>
<path d="M283.60,377.20 C284.00,376.08 284.77,372.40 286.00,370.50 C287.23,368.60 289.17,367.05 291.00,365.80 C292.83,364.55 293.17,364.42 297.00,363.00 C300.83,361.58 308.33,359.17 314.00,357.30 C319.67,355.43 325.33,354.02 331.00,351.80 C336.67,349.58 343.17,346.22 348.00,344.00 C352.83,341.78 356.27,339.80 360.00,338.50 C363.73,337.20 363.62,337.25 370.40,336.20 C377.18,335.15 389.10,333.20 400.70,332.20 C412.30,331.20 425.90,330.70 440.00,330.20 C454.10,329.70 470.20,329.20 485.30,329.20 C500.40,329.20 516.50,329.70 530.60,330.20 C544.70,330.70 558.30,331.20 569.90,332.20 C581.50,333.20 593.42,335.15 600.20,336.20 C606.98,337.25 606.87,337.20 610.60,338.50 C614.33,339.80 617.77,341.78 622.60,344.00 C627.43,346.22 633.93,349.58 639.60,351.80 C645.27,354.02 650.93,355.43 656.60,357.30 C662.27,359.17 669.77,361.58 673.60,363.00 C677.43,364.42 677.77,364.55 679.60,365.80 C681.43,367.05 683.37,368.60 684.60,370.50 C685.83,372.40 686.60,376.08 687.00,377.20" stroke="#3a3a3a" stroke-width="0.95" fill="none"/>
<path d="M297.00,363.00 C295.50,363.75 290.13,365.67 288.00,367.50 C285.87,369.33 284.93,372.17 284.20,374.00 C283.47,375.83 283.47,376.67 283.60,378.50 C283.73,380.33 283.93,383.17 285.00,385.00 C286.07,386.83 287.03,388.23 290.00,389.50 C292.97,390.77 296.13,392.02 302.80,392.60 C309.47,393.18 299.58,392.93 330.00,393.00 C360.42,393.07 459.42,393.00 485.30,393.00" stroke="#3a3a3a" stroke-width="0.95" fill="none"/>
<path d="M673.60,363.00 C675.10,363.75 680.47,365.67 682.60,367.50 C684.73,369.33 685.67,372.17 686.40,374.00 C687.13,375.83 687.13,376.67 687.00,378.50 C686.87,380.33 686.67,383.17 685.60,385.00 C684.53,386.83 683.57,388.23 680.60,389.50 C677.63,390.77 674.47,392.02 667.80,392.60 C661.13,393.18 671.02,392.93 640.60,393.00 C610.18,393.07 511.18,393.00 485.30,393.00" stroke="#3a3a3a" stroke-width="0.95" fill="none"/>
<path d="M348.30,339.70 C346.40,340.37 339.58,342.32 336.90,343.70 C334.22,345.08 333.15,346.58 332.20,348.00 C331.25,349.42 331.18,350.45 331.20,352.20 C331.22,353.95 331.50,356.98 332.30,358.50 C333.10,360.02 334.38,360.68 336.00,361.30 C337.62,361.92 331.33,361.98 342.00,362.20 C352.67,362.42 376.12,362.50 400.00,362.60 C423.88,362.70 471.08,362.77 485.30,362.80" stroke="#3a3a3a" stroke-width="0.95" fill="none"/>
<path d="M622.30,339.70 C624.20,340.37 631.02,342.32 633.70,343.70 C636.38,345.08 637.45,346.58 638.40,348.00 C639.35,349.42 639.42,350.45 639.40,352.20 C639.38,353.95 639.10,356.98 638.30,358.50 C637.50,360.02 636.22,360.68 634.60,361.30 C632.98,361.92 639.27,361.98 628.60,362.20 C617.93,362.42 594.48,362.50 570.60,362.60 C546.72,362.70 499.52,362.77 485.30,362.80" stroke="#3a3a3a" stroke-width="0.95" fill="none"/>
<path d="M331.50,354.00 C332.92,354.50 336.92,356.33 340.00,357.00 C343.08,357.67 336.67,357.75 350.00,358.00 C363.33,358.25 386.67,358.42 420.00,358.50 C453.33,358.58 516.67,358.58 550.00,358.50 C583.33,358.42 606.67,358.25 620.00,358.00 C633.33,357.75 626.83,357.67 630.00,357.00 C633.17,356.33 637.50,354.50 639.00,354.00" stroke="#4a4a4a" stroke-width="0.9" fill="none"/>
<path d="M375.40,334.30 C374.88,334.75 372.97,336.02 372.30,337.00 C371.63,337.98 371.37,339.17 371.40,340.20 C371.43,341.23 371.73,342.48 372.50,343.20 C373.27,343.92 373.08,344.23 376.00,344.50 C378.92,344.77 371.78,344.72 390.00,344.80 C408.22,344.88 469.42,344.97 485.30,345.00" stroke="#3a3a3a" stroke-width="0.95" fill="none"/>
<path d="M595.20,334.30 C595.72,334.75 597.63,336.02 598.30,337.00 C598.97,337.98 599.23,339.17 599.20,340.20 C599.17,341.23 598.87,342.48 598.10,343.20 C597.33,343.92 597.52,344.23 594.60,344.50 C591.68,344.77 598.82,344.72 580.60,344.80 C562.38,344.88 501.18,344.97 485.30,345.00" stroke="#3a3a3a" stroke-width="0.95" fill="none"/>
<path d="M380.00,343.50 C386.67,343.45 402.45,343.28 420.00,343.20 C437.55,343.12 463.53,343.00 485.30,343.00 C507.07,343.00 533.05,343.12 550.60,343.20 C568.15,343.28 583.93,343.45 590.60,343.50" stroke="#6a6a6a" stroke-width="0.8" fill="none"/>
<path d="M429.00,315.60 C428.27,315.92 425.53,316.68 424.60,317.50 C423.67,318.32 423.40,319.58 423.40,320.50 C423.40,321.42 423.67,322.42 424.60,323.00 C425.53,323.58 424.77,323.70 429.00,324.00 C433.23,324.30 440.62,324.53 450.00,324.80 C459.38,325.07 479.42,325.47 485.30,325.60" stroke="#3a3a3a" stroke-width="0.95" fill="none"/>
<path d="M541.60,315.60 C542.33,315.92 545.07,316.68 546.00,317.50 C546.93,318.32 547.20,319.58 547.20,320.50 C547.20,321.42 546.93,322.42 546.00,323.00 C545.07,323.58 545.83,323.70 541.60,324.00 C537.37,324.30 529.98,324.53 520.60,324.80 C511.22,325.07 491.18,325.47 485.30,325.60" stroke="#3a3a3a" stroke-width="0.95" fill="none"/>
<path d="M429.00,315.60 C432.50,315.42 440.62,314.77 450.00,314.50 C459.38,314.23 473.53,314.00 485.30,314.00 C497.07,314.00 511.22,314.23 520.60,314.50 C529.98,314.77 538.10,315.42 541.60,315.60" stroke="#4a4a4a" stroke-width="0.9" fill="none"/>
<path d="M452.9,368 H518" stroke="#404040" stroke-width="1.1" fill="none"/>
<circle cx="450.6" cy="368" r="2.3" stroke="#333" stroke-width="1" fill="#fff"/>
<circle cx="520.3" cy="368" r="2.3" stroke="#333" stroke-width="1" fill="#fff"/>
<text x="452.3" y="379.3" font-family="Liberation Sans" font-size="8.2" font-weight="bold" fill="#1a1a1a">H2</text>
</svg>
<!--/DRAW-->
<!--ICONS-->

<svg class="a" style="left:0;top:0" width="380" height="115" viewBox="0 0 380 115">
<defs>
<radialGradient id="sph" cx="0.35" cy="0.3" r="0.75"><stop offset="0" stop-color="#b8ecff"/><stop offset="0.35" stop-color="#2a8cff"/><stop offset="1" stop-color="#0000e0"/></radialGradient>
<linearGradient id="redg" x1="0" y1="0" x2="0" y2="1"><stop offset="0" stop-color="#e04848"/><stop offset="1" stop-color="#9a1010"/></linearGradient>
<linearGradient id="fire" x1="0" y1="0" x2="0" y2="1"><stop offset="0" stop-color="#c02000"/><stop offset="0.5" stop-color="#ff8000"/><stop offset="1" stop-color="#ffe080"/></linearGradient>
</defs>
<!-- title icon -->
<defs><radialGradient id="tig" cx="0.35" cy="0.5" r="0.7"><stop offset="0" stop-color="#c4c4c4"/><stop offset="1" stop-color="#e8e8e8"/></radialGradient></defs>
<circle cx="12.8" cy="11" r="5.8" fill="url(#tig)" stroke="#d8d8d8" stroke-width="0.6"/>
<path d="M8.5,8.5 q4,-3.5 8,-0.5" stroke="#fff" stroke-width="0.9" fill="none"/>
<path d="M13.5,11.5 q1.5,-3 3.8,-1.5 q-0.5,4 -2.5,5 q-2,-1 -1.3,-3.5z" fill="#fff"/>
<!-- surfboard hand -->
<ellipse cx="12.4" cy="51.3" rx="4.4" ry="9.8" fill="#fafafa" stroke="#7a7a7a" stroke-width="0.8"/>
<path d="M10,47 l4,2 M10.5,49 l3.5,-2.5 M11,45.5 l2,4" stroke="#f06060" stroke-width="0.7" fill="none"/>
<path d="M11.5,58 v-7 a1,1 0 0 1 2,0 v3 l2.5,1 a1.5,1.5 0 0 1 1,2 v2 l-1,2 h-3 z" fill="#fff" stroke="#505050" stroke-width="0.8"/>
<!-- folder -->
<path d="M29.5,47.5 L35,44.3 L42.6,47.6 L42.2,55.3 L36,57.8 L30.6,55.2 z" fill="#8a8a80"/>
<path d="M30.8,48.3 L35,46 L41.3,48.6 L41,54.8 L36,57 L31.3,54.8 z" fill="#f3ef7a"/>
<path d="M31,48.5 L35.2,46 L41.2,48.5" stroke="#fafad0" stroke-width="1" fill="none"/>
<path d="M32,49.6 L39.6,51.9 L39.4,57" stroke="#7a7a60" stroke-width="0.7" fill="none"/>
<path d="M41.5,55 L43.5,55 L42,58 z" fill="#404040"/>
<!-- floppy -->
<path d="M54.8,44.5 L57,43.8 L64.5,46.2 L64.6,57.8 L62,58.6 L55,56.5 z" fill="#5e5e5e"/>
<path d="M56,47.8 L63.3,50 L63.3,53 L56,50.8 z" fill="#f03010"/>
<path d="M56,50.5 L63.3,52.6 L63.3,54.5 L56,52.5 z" fill="#ffa020"/>
<path d="M56,52.5 L63.3,54.5 L63.3,56.8 L56,55 z" fill="#fffdf0"/>
<path d="M56.3,45.2 L63.4,47.5" stroke="#9a9a9a" stroke-width="0.8"/>
<path d="M63.5,57.5 L66.5,59 L63,59.5 z" fill="#202020"/>
<!-- ruler -->
<path d="M87,46.5 H100 M97.5,44 V50.5 M100,47 v3" stroke="#404040" stroke-width="0.7" fill="none"/>
<rect x="87" y="50.8" width="13.6" height="7.6" fill="#f0c418" stroke="#b09020" stroke-width="0.5"/>
<path d="M90,50.8 v2.5 M93.5,50.8 v2 M97,50.8 v2.5 M91,55 v2 M96,55 v2" stroke="#333" stroke-width="0.8"/>
<!-- design icon -->
<path d="M130.5,45 L134,50.5 L137.5,57" stroke="#202020" stroke-width="1"/>
<circle cx="130.8" cy="45.4" r="1.4" fill="#1030e0"/>
<circle cx="134" cy="51" r="2.2" fill="#f00010"/>
<circle cx="137" cy="56.6" r="1.6" fill="#10d010"/>
<!-- sphere -->
<circle cx="194" cy="51.3" r="6.2" fill="url(#sph)"/>
<!-- plan icon -->
<path d="M250.5,44.3 h9.5 l3,3 v10.5 h-12.5 z" fill="#f8f8f8" stroke="#808080" stroke-width="0.8"/>
<path d="M260,44.3 l3,3 h-3 z" fill="#4aa0e8"/>
<path d="M252.5,48 h6 M252.5,51 h8 M252.5,54 h8 M252.5,56.5 h5" stroke="#b0b0b0" stroke-width="0.6" stroke-dasharray="1.2 0.8"/>
<!-- cnc brush icon -->
<path d="M314.3,48.5 v-5 h3.6 v5" stroke="#202020" stroke-width="1" fill="none"/>
<path d="M310.5,48.8 h11.5 v3 a5.75,6 0 0 1 -11.5,0 z" fill="#eef" stroke="#202020" stroke-width="1"/>
<path d="M312,51 h8.5 M312,53.3 h8.5 M313,55.5 h6.5 M313.5,50 v6 M316,50 v7 M318.5,50 v6" stroke="#606060" stroke-width="0.6" stroke-dasharray="0.8 0.7"/>

<!-- child window icon -->
<path d="M14.1,73 h2.8 v3 h2.3 v5.3 q0,2 -2,2 h-4.8 q-1.6,0 -1.6,-2 v-5.3 h3.3 z" fill="#1c1c62"/>
<path d="M15,73.8 v1.8" stroke="#dde" stroke-width="0.8"/>
<path d="M12.6,77.8 h5.8 M12.6,80.2 h5.8 M14.3,76.8 v5 M16.7,76.8 v5" stroke="#d8d8e0" stroke-width="0.9"/>
<!-- magnifiers -->
<circle cx="19.1" cy="99" r="3.3" fill="none" stroke="#3a5060" stroke-width="1.5"/>
<path d="M21.5,101.5 L25,106.5" stroke="#3a5060" stroke-width="2"/>
<rect x="33.5" y="92.3" width="9.5" height="7.2" fill="none" stroke="#909090" stroke-width="0.8"/>
<circle cx="42.7" cy="100.6" r="3.4" fill="#fff" stroke="#3a5060" stroke-width="1.5"/>
<path d="M45,103 L49.3,107.8" stroke="#3a5060" stroke-width="2"/>
<!-- hand button -->
<rect x="61.5" y="89.5" width="22" height="22.5" rx="1" fill="#fff" stroke="#5a74f0" stroke-width="1"/>
<path d="M65.5,108.5 C66.5,105 68.5,102 69.5,99 L70.2,94.5 C70.6,93.3 72,93.5 71.9,94.8 L71.6,97.5 L73.3,92.6 C73.8,91.5 75.1,91.8 74.9,93 L74.1,97.3 L76.2,92.8 C76.8,91.8 78.1,92.3 77.7,93.4 L76.4,97.8 L78.3,95.2 C79,94.5 80.2,95.2 79.7,96.2 L76.6,102.5 C74.8,105 72,106.3 69,108.8" stroke="#1a1a1a" stroke-width="0.85" fill="none" stroke-linecap="round"/>
<path d="M71.5,104.5 l5,-2.5" stroke="#1a1a1a" stroke-width="0.7"/>
<!-- rotate icon -->
<ellipse cx="96" cy="100.5" rx="7.5" ry="7" fill="none" stroke="#3a3a3a" stroke-width="1.2" stroke-dasharray="9 3"/>
<path d="M89,101 a7,3.5 0 0 0 14,0" stroke="#2a2a2a" stroke-width="1.3" fill="none"/>
<path d="M87.5,98.5 l7.5,1 l-3.5,6 z" fill="#f01010"/>
<path d="M97.5,92.5 l5,4.5 l-3.5,5 z" fill="#f01010"/>
<path d="M100.5,103 l3.5,2.5 l-4.5,2.5 z" fill="#e01010"/>
<!-- gray surf icons -->
<path d="M115.5,98.8 q9.5,2.5 19.5,0 q-9.5,6 -19.5,0 z" fill="#bdbdbd" stroke="#b0b0b0" stroke-width="0.8"/>
<path d="M125.2,93.5 v3.5 M125.2,103 v4 M123.3,95.3 l1.9,-2 l1.9,2 M123.3,105.3 l1.9,2 l1.9,-2" stroke="#b8b8b8" stroke-width="1.2" fill="none"/>
<path d="M138,97.5 q10,4.5 20,2 q-9,5 -20,-2 z" fill="#bdbdbd" stroke="#b0b0b0" stroke-width="0.8"/>
<path d="M141,93.5 v4 M155.5,102.5 v4.5 M139.1,95.3 l1.9,-2 l1.9,2 M153.6,105 l1.9,2 l1.9,-2" stroke="#b8b8b8" stroke-width="1.2" fill="none"/>
<!-- red shapes -->
<ellipse cx="177" cy="100.5" rx="10.2" ry="3.5" fill="url(#redg)"/>
<path d="M191,100 q10,4 20,0 q-10,2.5 -20,0 z" fill="#b01818" stroke="#b01818" stroke-width="0.6"/>
<path d="M214,103.4 q5,-1 10,-6.4 q5,5.4 10,6.4 z" fill="url(#redg)"/>
<path d="M237.5,103.5 q4,-5 19.5,-6.5 q-4,5 -19.5,6.5 z" fill="url(#redg)"/>
<!-- rotate triangle -->
<path d="M268,96 a9.5,7 0 0 1 17,1 M284,103.5 a9.5,6 0 0 1 -16.5,4" stroke="#f01818" stroke-width="1.4" fill="none"/>
<path d="M282.5,95 l3.5,3 l1,-3.5 z" fill="#f01818"/>
<path d="M267,103 q5,-1 9.5,-6 q5,5 10,6 z" fill="url(#redg)"/>
<rect x="266.5" y="103" width="20" height="1.3" fill="#800808"/>
<!-- selected layers button -->
<rect x="294.5" y="89.5" width="22" height="22.8" rx="1" fill="#fff" stroke="#5a74f0" stroke-width="1"/>
<path d="M302,95 h10 M300,98 h12 M299.5,101 h12.5 M300,104 h12 M302,107 h10" stroke="#888" stroke-width="1.6"/>
<path d="M302,95 h4 M300,98 h4 M299.5,101 h4 M300,104 h4 M302,107 h4" stroke="#ff7a1a" stroke-width="1.8"/>
<!-- orange tool -->
<path d="M327,94.5 h5 v3" stroke="#707070" stroke-width="0.8" fill="none"/>
<rect x="323.5" y="98.5" width="11.5" height="8.5" rx="2" fill="#f59a40" stroke="#d06010" stroke-width="0.8"/>
<rect x="325.5" y="100.5" width="7.5" height="3" fill="#ffd8b0"/>
<!-- paper -->
<rect x="344.5" y="91.5" width="15.5" height="17.3" fill="#fff" stroke="#777" stroke-width="0.9"/>
<path d="M346.5,94 h11 M346.5,96 h8 M346.5,98.5 h3 M346,101 h12 M346,103.5 h12 M346.5,106.5 h7" stroke="#999" stroke-width="0.6" stroke-dasharray="1.5 0.6"/>
<!-- red circle -->
<circle cx="376.5" cy="100.3" r="6.2" fill="#c01010"/>
<path d="M373.5,96 v8.5 M376.5,95 v10.5 M379.5,96 v8.5" stroke="#ff9090" stroke-width="0.8"/>
</svg>

<!--/ICONS-->
<div class="a" style="left:0;top:598px;width:1039px;height:17px;background:#f0f0f0;border-top:1px solid #fafafa;border-bottom:1px solid #8a8a8a"></div>
<div class="a" style="left:2.6px;top:603.93px;font-size:9.1px;line-height:9.1px;color:#141414;">No bottom rail Z min security limitation.</div>
<div class="a" style="left:732px;top:600px;width:20px;height:15px;border:1px solid #c8c8c8;border-right-color:#fff;border-bottom-color:#fff"></div>
<div class="a" style="left:752px;top:600px;width:53px;height:15px;border:1px solid #c8c8c8;border-right-color:#fff;border-bottom-color:#fff"></div>
<div class="a" style="left:806px;top:600px;width:54px;height:15px;border:1px solid #c8c8c8;border-right-color:#fff;border-bottom-color:#fff"></div>
<div class="a" style="left:861px;top:600px;width:54px;height:15px;border:1px solid #c8c8c8;border-right-color:#fff;border-bottom-color:#fff"></div>
<div class="a" style="left:916px;top:600px;width:43px;height:15px;border:1px solid #c8c8c8;border-right-color:#fff;border-bottom-color:#fff"></div>
<div class="a" style="left:960px;top:600px;width:42px;height:15px;border:1px solid #c8c8c8;border-right-color:#fff;border-bottom-color:#fff"></div>
<div class="a" style="left:1003px;top:600px;width:20px;height:15px;border:1px solid #c8c8c8;border-right-color:#fff;border-bottom-color:#fff"></div>
<div class="a" style="left:734px;top:603.93px;font-size:9.1px;line-height:9.1px;color:#141414;transform:scaleX(0.93);transform-origin:0 0;">1971</div>
<div class="a" style="left:754px;top:603.93px;font-size:9.1px;line-height:9.1px;color:#141414;transform:scaleX(0.93);transform-origin:0 0;">X: 1466.65</div>
<div class="a" style="left:808px;top:603.93px;font-size:9.1px;line-height:9.1px;color:#141414;transform:scaleX(0.93);transform-origin:0 0;">Y: 348.64</div>
<div class="a" style="left:863px;top:603.93px;font-size:9.1px;line-height:9.1px;color:#141414;transform:scaleX(0.93);transform-origin:0 0;">Z: -9.37</div>
<svg class="a" style="left:1024px;top:602px" width="15" height="13"><path d="M13,3 L3,13 M13,7 L7,13 M13,11 L11,13" stroke="#b0b0b0" stroke-width="1"/></svg>
<div class="a" style="left:374px;top:0;width:6px;height:174px;background:linear-gradient(to right,rgba(0,0,0,0),rgba(0,0,0,.09))"></div>
<div class="a" style="left:378px;top:170px;width:661px;height:5px;background:linear-gradient(to bottom,rgba(0,0,0,.12),rgba(0,0,0,0))"></div>
<div class="a" style="left:380px;top:0;width:659px;height:170px;background:#f2f5fb"></div>
<div class="a" style="left:380px;top:0;width:659px;height:22px;background:#fff"></div>
<div class="a" style="left:386px;top:5.14px;font-size:9.9px;line-height:9.9px;color:#a4a4ac;transform:scaleX(0.896);transform-origin:0 0;">CNC Machine - D:\Documents\S3d models\MachinesThomasVX\Machine_APS_BullNose.s3d.xml - Parameters from board file</div>
<div class="a" style="left:1026px;top:4px;width:13px;height:15px;background:#e6e6e6"></div>
<div class="a" style="left:1030px;top:9px;font-size:7px;line-height:7px;color:#b0b0b0">x</div>
<div class="a" style="left:380px;top:36px;width:659px;height:1px;background:#a0a0a0"></div>
<div class="a" style="left:380px;top:22px;width:63px;height:14px;background:#eef1f9;border:1px solid #c5cff5;border-bottom:none"></div>
<div class="a" style="left:443px;top:22px;width:65px;height:14px;background:#eef1f9;border:1px solid #c5cff5;border-bottom:none"></div>
<div class="a" style="left:508px;top:22px;width:65px;height:14px;background:#eef1f9;border:1px solid #c5cff5;border-bottom:none"></div>
<div class="a" style="left:637px;top:22px;width:64.5px;height:14px;background:#eef1f9;border:1px solid #c5cff5;border-bottom:none"></div>
<div class="a" style="left:573px;top:22px;width:64.5px;height:15px;background:#fff;border:1px solid #6b82ee;border-bottom:none"></div>
<div class="a" style="left:391.5px;top:24.95px;font-size:8.9px;line-height:8.9px;color:#1c1c64;transform:scaleX(0.91);transform-origin:0 0;">Settings &gt;</div>
<div class="a" style="left:453.5px;top:24.95px;font-size:8.9px;line-height:8.9px;color:#1c1c64;transform:scaleX(0.91);transform-origin:0 0;">Blank Pos. &gt;</div>
<div class="a" style="left:519.5px;top:24.95px;font-size:8.9px;line-height:8.9px;color:#1c1c64;transform:scaleX(0.91);transform-origin:0 0;">Toolpath &gt;</div>
<div class="a" style="left:593px;top:24.95px;font-size:8.9px;line-height:8.9px;color:#1c1c64;transform:scaleX(0.91);transform-origin:0 0;">Disk &lt;</div>
<div class="a" style="left:656.5px;top:24.95px;font-size:8.9px;line-height:8.9px;color:#1c1c64;transform:scaleX(0.91);transform-origin:0 0;">Axis &gt;</div>
<div class="grp" style="left:397px;top:55px;width:114px;height:67px"></div>
<div class="a" style="left:401px;top:50px;width:62px;height:9px;background:#f2f5fb"></div>
<div class="a" style="left:402.5px;top:51.45px;font-size:8.9px;line-height:8.9px;color:#1c1c64;transform:scaleX(0.91);transform-origin:0 0;">Disk dimensions</div>
<div class="a" style="left:406px;top:65.75px;font-size:8.9px;line-height:8.9px;color:#1c1c64;transform:scaleX(0.91);transform-origin:0 0;">Diameter D</div>
<div class="inp" style="left:467.5px;top:63.0px;width:32px;height:13.5px"></div>
<div class="a" style="left:470.5px;top:65.75px;font-size:8.9px;line-height:8.9px;color:#202040;transform:scaleX(0.91);transform-origin:0 0;">278.60</div>
<div class="a" style="left:406px;top:85.05px;font-size:8.9px;line-height:8.9px;color:#1c1c64;transform:scaleX(0.91);transform-origin:0 0;">Thickness e</div>
<div class="inp" style="left:467.5px;top:82.3px;width:32px;height:13.5px"></div>
<div class="a" style="left:470.5px;top:85.05px;font-size:8.9px;line-height:8.9px;color:#202040;transform:scaleX(0.91);transform-origin:0 0;">12.00</div>
<div class="a" style="left:406px;top:104.45px;font-size:8.9px;line-height:8.9px;color:#1c1c64;transform:scaleX(0.91);transform-origin:0 0;">Corner radius r</div>
<div class="inp" style="left:467.5px;top:101.7px;width:32px;height:13.5px"></div>
<div class="a" style="left:470.5px;top:104.45px;font-size:8.9px;line-height:8.9px;color:#202040;transform:scaleX(0.91);transform-origin:0 0;">5.00</div>
<div class="grp" style="left:526px;top:55px;width:99px;height:67px"></div>
<div class="a" style="left:530px;top:50px;width:24px;height:9px;background:#f2f5fb"></div>
<div class="a" style="left:531px;top:51.45px;font-size:8.9px;line-height:8.9px;color:#1c1c64;transform:scaleX(0.91);transform-origin:0 0;">Motor</div>
<div class="a" style="left:536px;top:65.75px;font-size:8.9px;line-height:8.9px;color:#1c1c64;transform:scaleX(0.91);transform-origin:0 0;">Width W</div>
<div class="inp" style="left:582px;top:63.0px;width:32.5px;height:13.5px"></div>
<div class="a" style="left:585px;top:65.75px;font-size:8.9px;line-height:8.9px;color:#202040;transform:scaleX(0.91);transform-origin:0 0;">100.00</div>
<div class="a" style="left:536px;top:85.05px;font-size:8.9px;line-height:8.9px;color:#1c1c64;transform:scaleX(0.91);transform-origin:0 0;">Rear e1</div>
<div class="inp" style="left:582px;top:82.3px;width:32.5px;height:13.5px"></div>
<div class="a" style="left:585px;top:85.05px;font-size:8.9px;line-height:8.9px;color:#202040;transform:scaleX(0.91);transform-origin:0 0;">100.00</div>
<div class="a" style="left:536px;top:104.45px;font-size:8.9px;line-height:8.9px;color:#1c1c64;transform:scaleX(0.91);transform-origin:0 0;">Front e2</div>
<div class="inp" style="left:582px;top:101.7px;width:32.5px;height:13.5px"></div>
<div class="a" style="left:585px;top:104.45px;font-size:8.9px;line-height:8.9px;color:#202040;transform:scaleX(0.91);transform-origin:0 0;">40.00</div>
<div class="a" style="left:629px;top:38px;width:92px;height:92px;background:#f5f7fc"></div>
<svg class="a" style="left:629px;top:38px" width="92" height="98" viewBox="629 38 92 98">
<ellipse cx="678.5" cy="97.5" rx="35" ry="34.5" fill="#34349a"/>
<circle cx="675.8" cy="96" r="35" fill="#701af2"/>
<path d="M685,49 h5 l2,2 V63 l-7,-2 z" fill="#2a2a8a"/>
<path d="M664.9,49.3 H687.2 V94.3 a11.15,11.15 0 0 1 -22.3,0 z" fill="#050505"/>
<path d="M661.4,45.8 H683.7 V91 a11.15,11.15 0 0 1 -22.3,0 z" fill="#7c7c7c"/>
<path d="M662,69.3 H683.2 M662,69.3 l2,-1.2 M662,69.3 l2,1.2 M683.2,69.3 l-2,-1.2 M683.2,69.3 l-2,1.2" stroke="#111" stroke-width="0.6" fill="none"/>
<text x="668.5" y="67" font-family="Liberation Serif" font-size="5.5" fill="#222">W</text>
<path d="M651,118.5 L701,72.3" stroke="#111" stroke-width="0.7"/>
<path d="M651,118.5 l1,-2.6 l1.6,1.6 z M701,72.3 l-2.6,1 l1.6,1.6 z" fill="#111"/>
<circle cx="672.6" cy="92.6" r="1.1" fill="#000"/>
<text x="691.5" y="90.5" font-family="Liberation Serif" font-size="7" fill="#1a1a50">D</text>
<path d="M707.5,111 l3,1.6" stroke="#000" stroke-width="1.6"/>
<text x="712" y="115" font-family="Liberation Serif" font-size="5.5" fill="#333">e</text>
<path d="M684.5,44.5 l11,7 M686,44 l2.5,-1.5 M694,51.5 l2.5,-1.2" stroke="#000" stroke-width="0.8"/>
<path d="M686,45.2 l2.5,0.3 l-1,2 z M690,47.5 l2.5,0.6 l-1.2,2 z M694.8,50.8 l-2.5,-0.3 l1,-2 z" fill="#000"/>
<text x="688" y="42.5" font-family="Liberation Serif" font-size="4.5" fill="#333">e2</text>
<text x="694.5" y="46" font-family="Liberation Serif" font-size="4.5" fill="#333">e1</text>
</svg>

<div class="chk" style="left:737px;top:47.5px"></div>
<div class="a" style="left:750px;top:48.55px;font-size:8.9px;line-height:8.9px;color:#1c1c64;transform:scaleX(0.91);transform-origin:0 0;">Use actuators</div>
<div class="a" style="left:736.5px;top:66.15px;font-size:8.9px;line-height:8.9px;color:#1c1c64;transform:scaleX(0.91);transform-origin:0 0;">X1</div>
<div class="inp" style="left:752.6px;top:63.0px;width:32.5px;height:13.5px;background:#f4f4f4;border-color:#b8b8b8 #e4e4e4 #e4e4e4 #b8b8b8"></div>
<div class="a" style="left:755.5px;top:66.15px;font-size:8.9px;line-height:8.9px;color:#989898;transform:scaleX(0.91);transform-origin:0 0;">1462</div>
<div class="a" style="left:791px;top:66.15px;font-size:8.9px;line-height:8.9px;color:#1c1c64;transform:scaleX(0.91);transform-origin:0 0;">/O.</div>
<div class="inp" style="left:808.7px;top:63.0px;width:33px;height:13.5px;background:#f4f4f4;border-color:#a0a0a0 #e4e4e4 #e4e4e4 #a0a0a0"></div>
<div class="chk" style="left:847px;top:65.2px;border-color:#c4c4c4;background:#ececec"></div>
<div class="a" style="left:859px;top:66.15px;font-size:8.9px;line-height:8.9px;color:#a4a4a4;transform:scaleX(0.91);transform-origin:0 0;">from tail</div>
<div class="a" style="left:736.5px;top:85.55px;font-size:8.9px;line-height:8.9px;color:#1c1c64;transform:scaleX(0.91);transform-origin:0 0;">X2</div>
<div class="inp" style="left:752.6px;top:82.39999999999999px;width:32.5px;height:13.5px;background:#f4f4f4;border-color:#b8b8b8 #e4e4e4 #e4e4e4 #b8b8b8"></div>
<div class="a" style="left:755.5px;top:85.55px;font-size:8.9px;line-height:8.9px;color:#989898;transform:scaleX(0.91);transform-origin:0 0;">2150</div>
<div class="a" style="left:791px;top:85.55px;font-size:8.9px;line-height:8.9px;color:#1c1c64;transform:scaleX(0.91);transform-origin:0 0;">/O.</div>
<div class="inp" style="left:808.7px;top:82.39999999999999px;width:33px;height:13.5px;background:#f4f4f4;border-color:#a0a0a0 #e4e4e4 #e4e4e4 #a0a0a0"></div>
<div class="chk" style="left:847px;top:84.6px;border-color:#c4c4c4;background:#ececec"></div>
<div class="a" style="left:859px;top:85.55px;font-size:8.9px;line-height:8.9px;color:#a4a4a4;transform:scaleX(0.91);transform-origin:0 0;">from tail</div>
<div class="a" style="left:736.5px;top:104.85px;font-size:8.9px;line-height:8.9px;color:#1c1c64;transform:scaleX(0.91);transform-origin:0 0;">X3</div>
<div class="inp" style="left:752.6px;top:101.7px;width:32.5px;height:13.5px;background:#f4f4f4;border-color:#b8b8b8 #e4e4e4 #e4e4e4 #b8b8b8"></div>
<div class="a" style="left:755.5px;top:104.85px;font-size:8.9px;line-height:8.9px;color:#989898;transform:scaleX(0.91);transform-origin:0 0;">3139</div>
<div class="a" style="left:791px;top:104.85px;font-size:8.9px;line-height:8.9px;color:#1c1c64;transform:scaleX(0.91);transform-origin:0 0;">/O.</div>
<div class="inp" style="left:808.7px;top:101.7px;width:33px;height:13.5px;background:#f4f4f4;border-color:#a0a0a0 #e4e4e4 #e4e4e4 #a0a0a0"></div>
<div class="chk" style="left:847px;top:103.9px;border-color:#c4c4c4;background:#ececec"></div>
<div class="a" style="left:859px;top:104.85px;font-size:8.9px;line-height:8.9px;color:#a4a4a4;transform:scaleX(0.91);transform-origin:0 0;">from nose</div>
<div class="a" style="left:380px;top:141px;width:659px;height:1px;background:#a8a8a8"></div>
<div class="btn" style="left:388px;top:147.5px;width:68.5px;height:16.5px;border-color:#a8b8f0"></div>
<div class="a" style="left:402px;top:151.25px;font-size:8.9px;line-height:8.9px;color:#1c1c64;transform:scaleX(0.91);transform-origin:0 0;">Display All</div>
<div class="chk" style="left:462px;top:151.5px"></div>
<div class="a" style="left:475px;top:151.75px;font-size:8.9px;line-height:8.9px;color:#1c1c64;transform:scaleX(0.91);transform-origin:0 0;">Auto-collapse</div>
<div class="a" style="left:558.4px;top:151.25px;font-size:8.9px;line-height:8.9px;color:#1c1c64;transform:scaleX(0.91);transform-origin:0 0;">(axis as shown on screen)</div>
<div class="a" style="left:678px;top:147.5px;width:67px;height:17.5px;background:#e8e8e8;border:1px solid #dcdcdc;border-radius:2px"></div>
<div class="a" style="left:700px;top:151.25px;font-size:8.9px;line-height:8.9px;color:#a8a8a8;transform:scaleX(0.91);transform-origin:0 0;">Apply</div>
<div class="btn" style="left:786.5px;top:147px;width:95px;height:18px;border-color:#a8b8f0"></div>
<div class="a" style="left:790.7px;top:151.25px;font-size:8.9px;line-height:8.9px;color:#1c1c64;transform:scaleX(0.91);transform-origin:0 0;">Save as default param.</div>
<div class="btn" style="left:885px;top:147px;width:95.5px;height:18px;border-color:#a8b8f0"></div>
<div class="a" style="left:897px;top:151.25px;font-size:8.9px;line-height:8.9px;color:#1c1c64;transform:scaleX(0.91);transform-origin:0 0;">Use default param.</div>
<div class="btn" style="left:1018px;top:147px;width:16.5px;height:18px;border-color:#a8b8f0"></div>
<div class="a" style="left:1024px;top:151.25px;font-size:8.9px;line-height:8.9px;color:#1c1c64;transform:scaleX(0.91);transform-origin:0 0;">?</div>
</body></html>
